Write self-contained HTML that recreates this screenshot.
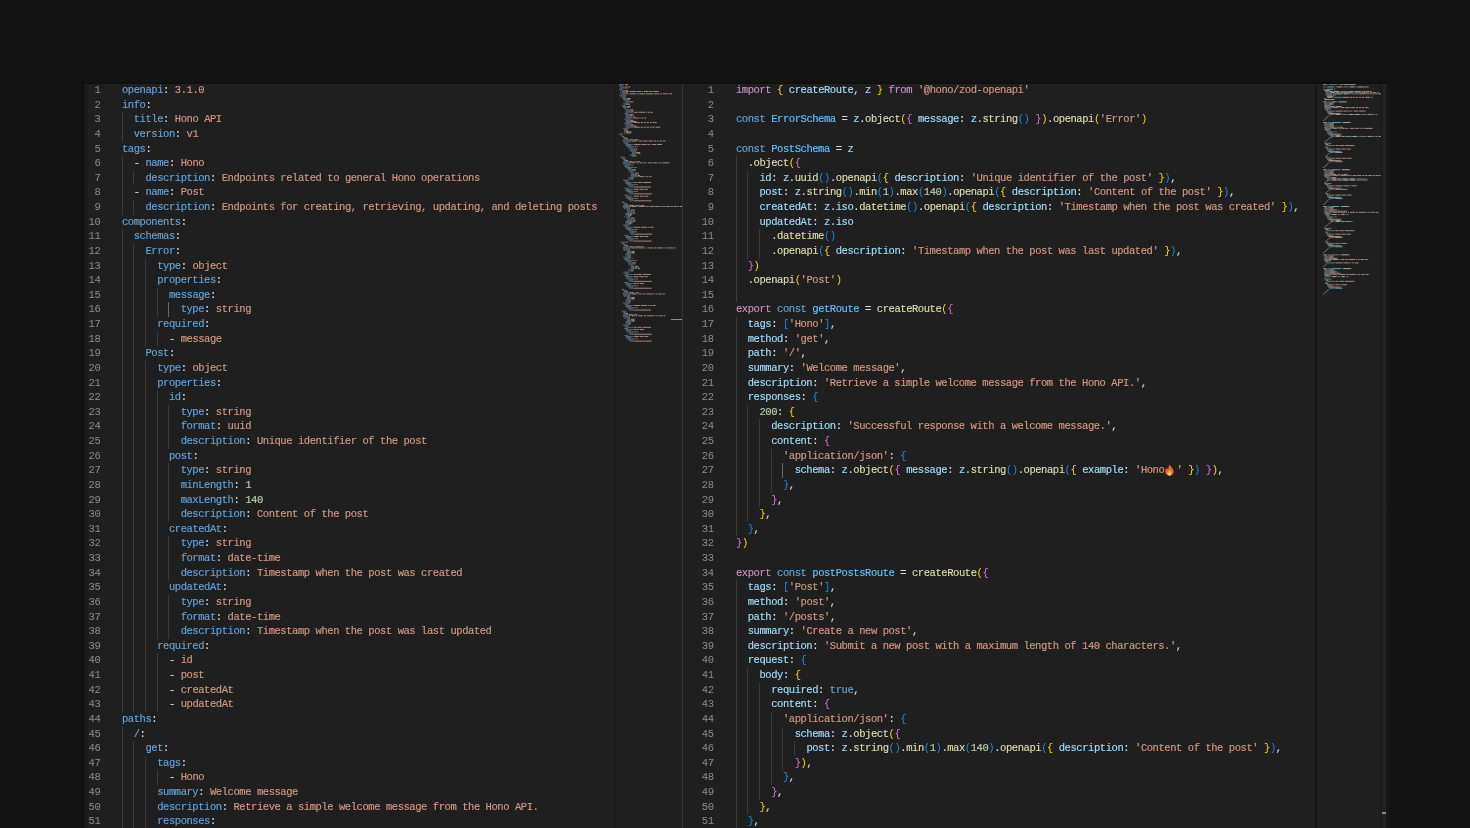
<!DOCTYPE html>
<html><head><meta charset="utf-8">
<style>
html,body{margin:0;padding:0}
body{width:1470px;height:828px;overflow:hidden;background:#131313;position:relative;font-family:"Liberation Mono",monospace}
.shadow{position:absolute;left:82px;top:82px;width:1306px;height:746px;background:#0f0f0f}
.ed{position:absolute;left:83.5px;top:84px;width:1302.5px;height:744px;background:#1f1f1f;overflow:hidden}
.gut,.code{position:absolute;top:-1px;font-size:10.5px;line-height:14.63px;letter-spacing:-0.437px}
.l,.n{white-space:pre}
.b{-webkit-text-stroke:0}
.gut,.code{will-change:transform}
.code{top:-0.7px;-webkit-text-stroke:0.15px currentColor}
.gut{color:#8d8d8d;text-align:right}
.n{height:14.63px}
.l{height:14.63px;position:relative;color:#d4d4d4}
.g{position:absolute;top:0;width:1px;height:14.63px;background:#3a3a3a}
.g.a{background:#6a6a6a}
.mm{position:absolute;top:0}
.mm rect{fill-opacity:.78}
.mm rect.k{fill-opacity:.5}
.bl{position:absolute;top:0;width:1.5px;height:744px;background:#161616}
.div{position:absolute;top:0;left:598.5px;width:1px;height:744px;background:#343434}
.sb{position:absolute;top:0;height:744px}
.mk{position:absolute;height:1.5px;background:#8e8e8e}
</style></head><body>
<div class="shadow"></div>
<div class="ed">
  <div style="position:absolute;left:0;top:0;width:4px;height:744px;background:#1b1b1b"></div>
  <div class="gut" style="left:0;width:16.3px"><div class="n">1</div><div class="n">2</div><div class="n">3</div><div class="n">4</div><div class="n">5</div><div class="n">6</div><div class="n">7</div><div class="n">8</div><div class="n">9</div><div class="n">10</div><div class="n">11</div><div class="n">12</div><div class="n">13</div><div class="n">14</div><div class="n">15</div><div class="n">16</div><div class="n">17</div><div class="n">18</div><div class="n">19</div><div class="n">20</div><div class="n">21</div><div class="n">22</div><div class="n">23</div><div class="n">24</div><div class="n">25</div><div class="n">26</div><div class="n">27</div><div class="n">28</div><div class="n">29</div><div class="n">30</div><div class="n">31</div><div class="n">32</div><div class="n">33</div><div class="n">34</div><div class="n">35</div><div class="n">36</div><div class="n">37</div><div class="n">38</div><div class="n">39</div><div class="n">40</div><div class="n">41</div><div class="n">42</div><div class="n">43</div><div class="n">44</div><div class="n">45</div><div class="n">46</div><div class="n">47</div><div class="n">48</div><div class="n">49</div><div class="n">50</div><div class="n">51</div></div>
  <div class="code" style="left:38.2px"><div class="l"><span style="color:#64a3d7">openapi</span><span style="color:#d8d8d8">:</span> <span style="color:#d09982">3.1.0</span></div><div class="l"><span style="color:#64a3d7">info</span><span style="color:#d8d8d8">:</span></div><div class="l"><i class="g" style="left:-0.50px"></i>  <span style="color:#64a3d7">title</span><span style="color:#d8d8d8">:</span> <span style="color:#d09982">Hono API</span></div><div class="l"><i class="g" style="left:-0.50px"></i>  <span style="color:#64a3d7">version</span><span style="color:#d8d8d8">:</span> <span style="color:#d09982">v1</span></div><div class="l"><span style="color:#64a3d7">tags</span><span style="color:#d8d8d8">:</span></div><div class="l"><i class="g" style="left:-0.50px"></i>  <span style="color:#d8d8d8">- </span><span style="color:#64a3d7">name</span><span style="color:#d8d8d8">:</span> <span style="color:#d09982">Hono</span></div><div class="l"><i class="g" style="left:-0.50px"></i><i class="g" style="left:11.22px"></i>    <span style="color:#64a3d7">description</span><span style="color:#d8d8d8">:</span> <span style="color:#d09982">Endpoints related to general Hono operations</span></div><div class="l"><i class="g" style="left:-0.50px"></i>  <span style="color:#d8d8d8">- </span><span style="color:#64a3d7">name</span><span style="color:#d8d8d8">:</span> <span style="color:#d09982">Post</span></div><div class="l"><i class="g" style="left:-0.50px"></i><i class="g" style="left:11.22px"></i>    <span style="color:#64a3d7">description</span><span style="color:#d8d8d8">:</span> <span style="color:#d09982">Endpoints for creating, retrieving, updating, and deleting posts</span></div><div class="l"><span style="color:#64a3d7">components</span><span style="color:#d8d8d8">:</span></div><div class="l"><i class="g" style="left:-0.50px"></i>  <span style="color:#64a3d7">schemas</span><span style="color:#d8d8d8">:</span></div><div class="l"><i class="g" style="left:-0.50px"></i><i class="g" style="left:11.22px"></i>    <span style="color:#64a3d7">Error</span><span style="color:#d8d8d8">:</span></div><div class="l"><i class="g" style="left:-0.50px"></i><i class="g" style="left:11.22px"></i><i class="g" style="left:22.95px"></i>      <span style="color:#64a3d7">type</span><span style="color:#d8d8d8">:</span> <span style="color:#d09982">object</span></div><div class="l"><i class="g" style="left:-0.50px"></i><i class="g" style="left:11.22px"></i><i class="g" style="left:22.95px"></i>      <span style="color:#64a3d7">properties</span><span style="color:#d8d8d8">:</span></div><div class="l"><i class="g" style="left:-0.50px"></i><i class="g" style="left:11.22px"></i><i class="g" style="left:22.95px"></i><i class="g" style="left:34.67px"></i>        <span style="color:#64a3d7">message</span><span style="color:#d8d8d8">:</span></div><div class="l"><i class="g" style="left:-0.50px"></i><i class="g" style="left:11.22px"></i><i class="g" style="left:22.95px"></i><i class="g" style="left:34.67px"></i><i class="g a" style="left:46.40px"></i>          <span style="color:#64a3d7">type</span><span style="color:#d8d8d8">:</span> <span style="color:#d09982">string</span></div><div class="l"><i class="g" style="left:-0.50px"></i><i class="g" style="left:11.22px"></i><i class="g" style="left:22.95px"></i>      <span style="color:#64a3d7">required</span><span style="color:#d8d8d8">:</span></div><div class="l"><i class="g" style="left:-0.50px"></i><i class="g" style="left:11.22px"></i><i class="g" style="left:22.95px"></i><i class="g" style="left:34.67px"></i>        <span style="color:#d8d8d8">- </span><span style="color:#d09982">message</span></div><div class="l"><i class="g" style="left:-0.50px"></i><i class="g" style="left:11.22px"></i>    <span style="color:#64a3d7">Post</span><span style="color:#d8d8d8">:</span></div><div class="l"><i class="g" style="left:-0.50px"></i><i class="g" style="left:11.22px"></i><i class="g" style="left:22.95px"></i>      <span style="color:#64a3d7">type</span><span style="color:#d8d8d8">:</span> <span style="color:#d09982">object</span></div><div class="l"><i class="g" style="left:-0.50px"></i><i class="g" style="left:11.22px"></i><i class="g" style="left:22.95px"></i>      <span style="color:#64a3d7">properties</span><span style="color:#d8d8d8">:</span></div><div class="l"><i class="g" style="left:-0.50px"></i><i class="g" style="left:11.22px"></i><i class="g" style="left:22.95px"></i><i class="g" style="left:34.67px"></i>        <span style="color:#64a3d7">id</span><span style="color:#d8d8d8">:</span></div><div class="l"><i class="g" style="left:-0.50px"></i><i class="g" style="left:11.22px"></i><i class="g" style="left:22.95px"></i><i class="g" style="left:34.67px"></i><i class="g" style="left:46.40px"></i>          <span style="color:#64a3d7">type</span><span style="color:#d8d8d8">:</span> <span style="color:#d09982">string</span></div><div class="l"><i class="g" style="left:-0.50px"></i><i class="g" style="left:11.22px"></i><i class="g" style="left:22.95px"></i><i class="g" style="left:34.67px"></i><i class="g" style="left:46.40px"></i>          <span style="color:#64a3d7">format</span><span style="color:#d8d8d8">:</span> <span style="color:#d09982">uuid</span></div><div class="l"><i class="g" style="left:-0.50px"></i><i class="g" style="left:11.22px"></i><i class="g" style="left:22.95px"></i><i class="g" style="left:34.67px"></i><i class="g" style="left:46.40px"></i>          <span style="color:#64a3d7">description</span><span style="color:#d8d8d8">:</span> <span style="color:#d09982">Unique identifier of the post</span></div><div class="l"><i class="g" style="left:-0.50px"></i><i class="g" style="left:11.22px"></i><i class="g" style="left:22.95px"></i><i class="g" style="left:34.67px"></i>        <span style="color:#64a3d7">post</span><span style="color:#d8d8d8">:</span></div><div class="l"><i class="g" style="left:-0.50px"></i><i class="g" style="left:11.22px"></i><i class="g" style="left:22.95px"></i><i class="g" style="left:34.67px"></i><i class="g" style="left:46.40px"></i>          <span style="color:#64a3d7">type</span><span style="color:#d8d8d8">:</span> <span style="color:#d09982">string</span></div><div class="l"><i class="g" style="left:-0.50px"></i><i class="g" style="left:11.22px"></i><i class="g" style="left:22.95px"></i><i class="g" style="left:34.67px"></i><i class="g" style="left:46.40px"></i>          <span style="color:#64a3d7">minLength</span><span style="color:#d8d8d8">:</span> <span style="color:#b9d0ae">1</span></div><div class="l"><i class="g" style="left:-0.50px"></i><i class="g" style="left:11.22px"></i><i class="g" style="left:22.95px"></i><i class="g" style="left:34.67px"></i><i class="g" style="left:46.40px"></i>          <span style="color:#64a3d7">maxLength</span><span style="color:#d8d8d8">:</span> <span style="color:#b9d0ae">140</span></div><div class="l"><i class="g" style="left:-0.50px"></i><i class="g" style="left:11.22px"></i><i class="g" style="left:22.95px"></i><i class="g" style="left:34.67px"></i><i class="g" style="left:46.40px"></i>          <span style="color:#64a3d7">description</span><span style="color:#d8d8d8">:</span> <span style="color:#d09982">Content of the post</span></div><div class="l"><i class="g" style="left:-0.50px"></i><i class="g" style="left:11.22px"></i><i class="g" style="left:22.95px"></i><i class="g" style="left:34.67px"></i>        <span style="color:#64a3d7">createdAt</span><span style="color:#d8d8d8">:</span></div><div class="l"><i class="g" style="left:-0.50px"></i><i class="g" style="left:11.22px"></i><i class="g" style="left:22.95px"></i><i class="g" style="left:34.67px"></i><i class="g" style="left:46.40px"></i>          <span style="color:#64a3d7">type</span><span style="color:#d8d8d8">:</span> <span style="color:#d09982">string</span></div><div class="l"><i class="g" style="left:-0.50px"></i><i class="g" style="left:11.22px"></i><i class="g" style="left:22.95px"></i><i class="g" style="left:34.67px"></i><i class="g" style="left:46.40px"></i>          <span style="color:#64a3d7">format</span><span style="color:#d8d8d8">:</span> <span style="color:#d09982">date-time</span></div><div class="l"><i class="g" style="left:-0.50px"></i><i class="g" style="left:11.22px"></i><i class="g" style="left:22.95px"></i><i class="g" style="left:34.67px"></i><i class="g" style="left:46.40px"></i>          <span style="color:#64a3d7">description</span><span style="color:#d8d8d8">:</span> <span style="color:#d09982">Timestamp when the post was created</span></div><div class="l"><i class="g" style="left:-0.50px"></i><i class="g" style="left:11.22px"></i><i class="g" style="left:22.95px"></i><i class="g" style="left:34.67px"></i>        <span style="color:#64a3d7">updatedAt</span><span style="color:#d8d8d8">:</span></div><div class="l"><i class="g" style="left:-0.50px"></i><i class="g" style="left:11.22px"></i><i class="g" style="left:22.95px"></i><i class="g" style="left:34.67px"></i><i class="g" style="left:46.40px"></i>          <span style="color:#64a3d7">type</span><span style="color:#d8d8d8">:</span> <span style="color:#d09982">string</span></div><div class="l"><i class="g" style="left:-0.50px"></i><i class="g" style="left:11.22px"></i><i class="g" style="left:22.95px"></i><i class="g" style="left:34.67px"></i><i class="g" style="left:46.40px"></i>          <span style="color:#64a3d7">format</span><span style="color:#d8d8d8">:</span> <span style="color:#d09982">date-time</span></div><div class="l"><i class="g" style="left:-0.50px"></i><i class="g" style="left:11.22px"></i><i class="g" style="left:22.95px"></i><i class="g" style="left:34.67px"></i><i class="g" style="left:46.40px"></i>          <span style="color:#64a3d7">description</span><span style="color:#d8d8d8">:</span> <span style="color:#d09982">Timestamp when the post was last updated</span></div><div class="l"><i class="g" style="left:-0.50px"></i><i class="g" style="left:11.22px"></i><i class="g" style="left:22.95px"></i>      <span style="color:#64a3d7">required</span><span style="color:#d8d8d8">:</span></div><div class="l"><i class="g" style="left:-0.50px"></i><i class="g" style="left:11.22px"></i><i class="g" style="left:22.95px"></i><i class="g" style="left:34.67px"></i>        <span style="color:#d8d8d8">- </span><span style="color:#d09982">id</span></div><div class="l"><i class="g" style="left:-0.50px"></i><i class="g" style="left:11.22px"></i><i class="g" style="left:22.95px"></i><i class="g" style="left:34.67px"></i>        <span style="color:#d8d8d8">- </span><span style="color:#d09982">post</span></div><div class="l"><i class="g" style="left:-0.50px"></i><i class="g" style="left:11.22px"></i><i class="g" style="left:22.95px"></i><i class="g" style="left:34.67px"></i>        <span style="color:#d8d8d8">- </span><span style="color:#d09982">createdAt</span></div><div class="l"><i class="g" style="left:-0.50px"></i><i class="g" style="left:11.22px"></i><i class="g" style="left:22.95px"></i><i class="g" style="left:34.67px"></i>        <span style="color:#d8d8d8">- </span><span style="color:#d09982">updatedAt</span></div><div class="l"><span style="color:#64a3d7">paths</span><span style="color:#d8d8d8">:</span></div><div class="l"><i class="g" style="left:-0.50px"></i>  <span style="color:#64a3d7">/</span><span style="color:#d8d8d8">:</span></div><div class="l"><i class="g" style="left:-0.50px"></i><i class="g" style="left:11.22px"></i>    <span style="color:#64a3d7">get</span><span style="color:#d8d8d8">:</span></div><div class="l"><i class="g" style="left:-0.50px"></i><i class="g" style="left:11.22px"></i><i class="g" style="left:22.95px"></i>      <span style="color:#64a3d7">tags</span><span style="color:#d8d8d8">:</span></div><div class="l"><i class="g" style="left:-0.50px"></i><i class="g" style="left:11.22px"></i><i class="g" style="left:22.95px"></i><i class="g" style="left:34.67px"></i>        <span style="color:#d8d8d8">- </span><span style="color:#d09982">Hono</span></div><div class="l"><i class="g" style="left:-0.50px"></i><i class="g" style="left:11.22px"></i><i class="g" style="left:22.95px"></i>      <span style="color:#64a3d7">summary</span><span style="color:#d8d8d8">:</span> <span style="color:#d09982">Welcome message</span></div><div class="l"><i class="g" style="left:-0.50px"></i><i class="g" style="left:11.22px"></i><i class="g" style="left:22.95px"></i>      <span style="color:#64a3d7">description</span><span style="color:#d8d8d8">:</span> <span style="color:#d09982">Retrieve a simple welcome message from the Hono API.</span></div><div class="l"><i class="g" style="left:-0.50px"></i><i class="g" style="left:11.22px"></i><i class="g" style="left:22.95px"></i>      <span style="color:#64a3d7">responses</span><span style="color:#d8d8d8">:</span></div></div>
  <div class="bl" style="left:530px"></div>
  <svg class="mm" style="left:531.5px" width="67" height="744"><rect class="k" x="4.00" y="0.20" width="4.44" height="0.90" fill="#8cb9dd"/><rect x="8.59" y="0.20" width="0.51" height="0.90" fill="#dedede"/><rect x="9.90" y="0.20" width="3.13" height="0.90" fill="#d8b2a2"/><rect class="k" x="4.00" y="1.35" width="2.47" height="0.90" fill="#8cb9dd"/><rect x="6.62" y="1.35" width="0.51" height="0.90" fill="#dedede"/><rect class="k" x="5.31" y="2.50" width="3.13" height="0.90" fill="#8cb9dd"/><rect x="8.59" y="2.50" width="0.51" height="0.90" fill="#dedede"/><rect x="9.90" y="2.50" width="2.47" height="0.90" fill="#d8b2a2"/><rect x="13.18" y="2.50" width="1.82" height="0.90" fill="#d8b2a2"/><rect class="k" x="5.31" y="3.65" width="4.44" height="0.90" fill="#8cb9dd"/><rect x="9.90" y="3.65" width="0.51" height="0.90" fill="#dedede"/><rect x="11.22" y="3.65" width="1.16" height="0.90" fill="#d8b2a2"/><rect class="k" x="4.00" y="4.80" width="2.47" height="0.90" fill="#8cb9dd"/><rect x="6.62" y="4.80" width="0.51" height="0.90" fill="#dedede"/><rect x="5.31" y="5.95" width="0.51" height="0.90" fill="#dedede"/><rect class="k" x="6.62" y="5.95" width="2.47" height="0.90" fill="#8cb9dd"/><rect x="9.25" y="5.95" width="0.51" height="0.90" fill="#dedede"/><rect x="10.56" y="5.95" width="2.47" height="0.90" fill="#d8b2a2"/><rect class="k" x="6.62" y="7.10" width="7.07" height="0.90" fill="#8cb9dd"/><rect x="13.84" y="7.10" width="0.51" height="0.90" fill="#dedede"/><rect x="15.15" y="7.10" width="5.75" height="0.90" fill="#d8b2a2"/><rect x="21.71" y="7.10" width="4.44" height="0.90" fill="#d8b2a2"/><rect x="26.96" y="7.10" width="1.16" height="0.90" fill="#d8b2a2"/><rect x="28.93" y="7.10" width="4.44" height="0.90" fill="#d8b2a2"/><rect x="34.18" y="7.10" width="2.47" height="0.90" fill="#d8b2a2"/><rect x="37.46" y="7.10" width="6.41" height="0.90" fill="#d8b2a2"/><rect x="5.31" y="8.25" width="0.51" height="0.90" fill="#dedede"/><rect class="k" x="6.62" y="8.25" width="2.47" height="0.90" fill="#8cb9dd"/><rect x="9.25" y="8.25" width="0.51" height="0.90" fill="#dedede"/><rect x="10.56" y="8.25" width="2.47" height="0.90" fill="#d8b2a2"/><rect class="k" x="6.62" y="9.40" width="7.07" height="0.90" fill="#8cb9dd"/><rect x="13.84" y="9.40" width="0.51" height="0.90" fill="#dedede"/><rect x="15.15" y="9.40" width="5.75" height="0.90" fill="#d8b2a2"/><rect x="21.71" y="9.40" width="1.82" height="0.90" fill="#d8b2a2"/><rect x="24.34" y="9.40" width="5.75" height="0.90" fill="#d8b2a2"/><rect x="30.90" y="9.40" width="7.07" height="0.90" fill="#d8b2a2"/><rect x="38.77" y="9.40" width="5.75" height="0.90" fill="#d8b2a2"/><rect x="45.33" y="9.40" width="1.82" height="0.90" fill="#d8b2a2"/><rect x="47.95" y="9.40" width="5.10" height="0.90" fill="#d8b2a2"/><rect x="53.86" y="9.40" width="3.13" height="0.90" fill="#d8b2a2"/><rect class="k" x="4.00" y="10.55" width="6.41" height="0.90" fill="#8cb9dd"/><rect x="10.56" y="10.55" width="0.51" height="0.90" fill="#dedede"/><rect class="k" x="5.31" y="11.70" width="4.44" height="0.90" fill="#8cb9dd"/><rect x="9.90" y="11.70" width="0.51" height="0.90" fill="#dedede"/><rect class="k" x="6.62" y="12.85" width="3.13" height="0.90" fill="#8cb9dd"/><rect x="9.90" y="12.85" width="0.51" height="0.90" fill="#dedede"/><rect class="k" x="7.94" y="14.00" width="2.47" height="0.90" fill="#8cb9dd"/><rect x="10.56" y="14.00" width="0.51" height="0.90" fill="#dedede"/><rect x="11.87" y="14.00" width="3.79" height="0.90" fill="#d8b2a2"/><rect class="k" x="7.94" y="15.15" width="6.41" height="0.90" fill="#8cb9dd"/><rect x="14.50" y="15.15" width="0.51" height="0.90" fill="#dedede"/><rect class="k" x="9.25" y="16.30" width="4.44" height="0.90" fill="#8cb9dd"/><rect x="13.84" y="16.30" width="0.51" height="0.90" fill="#dedede"/><rect class="k" x="10.56" y="17.45" width="2.47" height="0.90" fill="#8cb9dd"/><rect x="13.18" y="17.45" width="0.51" height="0.90" fill="#dedede"/><rect x="14.50" y="17.45" width="3.79" height="0.90" fill="#d8b2a2"/><rect class="k" x="7.94" y="18.60" width="5.10" height="0.90" fill="#8cb9dd"/><rect x="13.18" y="18.60" width="0.51" height="0.90" fill="#dedede"/><rect x="9.25" y="19.75" width="0.51" height="0.90" fill="#dedede"/><rect x="10.56" y="19.75" width="4.44" height="0.90" fill="#d8b2a2"/><rect class="k" x="6.62" y="20.90" width="2.47" height="0.90" fill="#8cb9dd"/><rect x="9.25" y="20.90" width="0.51" height="0.90" fill="#dedede"/><rect class="k" x="7.94" y="22.05" width="2.47" height="0.90" fill="#8cb9dd"/><rect x="10.56" y="22.05" width="0.51" height="0.90" fill="#dedede"/><rect x="11.87" y="22.05" width="3.79" height="0.90" fill="#d8b2a2"/><rect class="k" x="7.94" y="23.20" width="6.41" height="0.90" fill="#8cb9dd"/><rect x="14.50" y="23.20" width="0.51" height="0.90" fill="#dedede"/><rect class="k" x="9.25" y="24.35" width="1.16" height="0.90" fill="#8cb9dd"/><rect x="10.56" y="24.35" width="0.51" height="0.90" fill="#dedede"/><rect class="k" x="10.56" y="25.50" width="2.47" height="0.90" fill="#8cb9dd"/><rect x="13.18" y="25.50" width="0.51" height="0.90" fill="#dedede"/><rect x="14.50" y="25.50" width="3.79" height="0.90" fill="#d8b2a2"/><rect class="k" x="10.56" y="26.65" width="3.79" height="0.90" fill="#8cb9dd"/><rect x="14.50" y="26.65" width="0.51" height="0.90" fill="#dedede"/><rect x="15.81" y="26.65" width="2.47" height="0.90" fill="#d8b2a2"/><rect class="k" x="10.56" y="27.80" width="7.07" height="0.90" fill="#8cb9dd"/><rect x="17.78" y="27.80" width="0.51" height="0.90" fill="#dedede"/><rect x="19.09" y="27.80" width="3.79" height="0.90" fill="#d8b2a2"/><rect x="23.68" y="27.80" width="6.41" height="0.90" fill="#d8b2a2"/><rect x="30.90" y="27.80" width="1.16" height="0.90" fill="#d8b2a2"/><rect x="32.86" y="27.80" width="1.82" height="0.90" fill="#d8b2a2"/><rect x="35.49" y="27.80" width="2.47" height="0.90" fill="#d8b2a2"/><rect class="k" x="9.25" y="28.95" width="2.47" height="0.90" fill="#8cb9dd"/><rect x="11.87" y="28.95" width="0.51" height="0.90" fill="#dedede"/><rect class="k" x="10.56" y="30.10" width="2.47" height="0.90" fill="#8cb9dd"/><rect x="13.18" y="30.10" width="0.51" height="0.90" fill="#dedede"/><rect x="14.50" y="30.10" width="3.79" height="0.90" fill="#d8b2a2"/><rect class="k" x="10.56" y="31.25" width="5.75" height="0.90" fill="#8cb9dd"/><rect x="16.46" y="31.25" width="0.51" height="0.90" fill="#dedede"/><rect x="17.78" y="31.25" width="0.51" height="0.90" fill="#c8d8c0"/><rect class="k" x="10.56" y="32.40" width="5.75" height="0.90" fill="#8cb9dd"/><rect x="16.46" y="32.40" width="0.51" height="0.90" fill="#dedede"/><rect x="17.78" y="32.40" width="1.82" height="0.90" fill="#c8d8c0"/><rect class="k" x="10.56" y="33.55" width="7.07" height="0.90" fill="#8cb9dd"/><rect x="17.78" y="33.55" width="0.51" height="0.90" fill="#dedede"/><rect x="19.09" y="33.55" width="4.44" height="0.90" fill="#d8b2a2"/><rect x="24.34" y="33.55" width="1.16" height="0.90" fill="#d8b2a2"/><rect x="26.30" y="33.55" width="1.82" height="0.90" fill="#d8b2a2"/><rect x="28.93" y="33.55" width="2.47" height="0.90" fill="#d8b2a2"/><rect class="k" x="9.25" y="34.70" width="5.75" height="0.90" fill="#8cb9dd"/><rect x="15.15" y="34.70" width="0.51" height="0.90" fill="#dedede"/><rect class="k" x="10.56" y="35.85" width="2.47" height="0.90" fill="#8cb9dd"/><rect x="13.18" y="35.85" width="0.51" height="0.90" fill="#dedede"/><rect x="14.50" y="35.85" width="3.79" height="0.90" fill="#d8b2a2"/><rect class="k" x="10.56" y="37.00" width="3.79" height="0.90" fill="#8cb9dd"/><rect x="14.50" y="37.00" width="0.51" height="0.90" fill="#dedede"/><rect x="15.81" y="37.00" width="5.75" height="0.90" fill="#d8b2a2"/><rect class="k" x="10.56" y="38.15" width="7.07" height="0.90" fill="#8cb9dd"/><rect x="17.78" y="38.15" width="0.51" height="0.90" fill="#dedede"/><rect x="19.09" y="38.15" width="5.75" height="0.90" fill="#d8b2a2"/><rect x="25.65" y="38.15" width="2.47" height="0.90" fill="#d8b2a2"/><rect x="28.93" y="38.15" width="1.82" height="0.90" fill="#d8b2a2"/><rect x="31.55" y="38.15" width="2.47" height="0.90" fill="#d8b2a2"/><rect x="34.83" y="38.15" width="1.82" height="0.90" fill="#d8b2a2"/><rect x="37.46" y="38.15" width="4.44" height="0.90" fill="#d8b2a2"/><rect class="k" x="9.25" y="39.30" width="5.75" height="0.90" fill="#8cb9dd"/><rect x="15.15" y="39.30" width="0.51" height="0.90" fill="#dedede"/><rect class="k" x="10.56" y="40.45" width="2.47" height="0.90" fill="#8cb9dd"/><rect x="13.18" y="40.45" width="0.51" height="0.90" fill="#dedede"/><rect x="14.50" y="40.45" width="3.79" height="0.90" fill="#d8b2a2"/><rect class="k" x="10.56" y="41.60" width="3.79" height="0.90" fill="#8cb9dd"/><rect x="14.50" y="41.60" width="0.51" height="0.90" fill="#dedede"/><rect x="15.81" y="41.60" width="5.75" height="0.90" fill="#d8b2a2"/><rect class="k" x="10.56" y="42.75" width="7.07" height="0.90" fill="#8cb9dd"/><rect x="17.78" y="42.75" width="0.51" height="0.90" fill="#dedede"/><rect x="19.09" y="42.75" width="5.75" height="0.90" fill="#d8b2a2"/><rect x="25.65" y="42.75" width="2.47" height="0.90" fill="#d8b2a2"/><rect x="28.93" y="42.75" width="1.82" height="0.90" fill="#d8b2a2"/><rect x="31.55" y="42.75" width="2.47" height="0.90" fill="#d8b2a2"/><rect x="34.83" y="42.75" width="1.82" height="0.90" fill="#d8b2a2"/><rect x="37.46" y="42.75" width="2.47" height="0.90" fill="#d8b2a2"/><rect x="40.74" y="42.75" width="4.44" height="0.90" fill="#d8b2a2"/><rect class="k" x="7.94" y="43.90" width="5.10" height="0.90" fill="#8cb9dd"/><rect x="13.18" y="43.90" width="0.51" height="0.90" fill="#dedede"/><rect x="9.25" y="45.05" width="0.51" height="0.90" fill="#dedede"/><rect x="10.56" y="45.05" width="1.16" height="0.90" fill="#d8b2a2"/><rect x="9.25" y="46.20" width="0.51" height="0.90" fill="#dedede"/><rect x="10.56" y="46.20" width="2.47" height="0.90" fill="#d8b2a2"/><rect x="9.25" y="47.35" width="0.51" height="0.90" fill="#dedede"/><rect x="10.56" y="47.35" width="5.75" height="0.90" fill="#d8b2a2"/><rect x="9.25" y="48.50" width="0.51" height="0.90" fill="#dedede"/><rect x="10.56" y="48.50" width="5.75" height="0.90" fill="#d8b2a2"/><rect class="k" x="4.00" y="49.65" width="3.13" height="0.90" fill="#8cb9dd"/><rect x="7.28" y="49.65" width="0.51" height="0.90" fill="#dedede"/><rect class="k" x="5.31" y="50.80" width="0.51" height="0.90" fill="#8cb9dd"/><rect x="5.97" y="50.80" width="0.51" height="0.90" fill="#dedede"/><rect class="k" x="6.62" y="51.95" width="1.82" height="0.90" fill="#8cb9dd"/><rect x="8.59" y="51.95" width="0.51" height="0.90" fill="#dedede"/><rect class="k" x="7.94" y="53.10" width="2.47" height="0.90" fill="#8cb9dd"/><rect x="10.56" y="53.10" width="0.51" height="0.90" fill="#dedede"/><rect x="9.25" y="54.25" width="0.51" height="0.90" fill="#dedede"/><rect x="10.56" y="54.25" width="2.47" height="0.90" fill="#d8b2a2"/><rect class="k" x="7.94" y="55.40" width="4.44" height="0.90" fill="#8cb9dd"/><rect x="12.53" y="55.40" width="0.51" height="0.90" fill="#dedede"/><rect x="13.84" y="55.40" width="4.44" height="0.90" fill="#d8b2a2"/><rect x="19.09" y="55.40" width="4.44" height="0.90" fill="#d8b2a2"/><rect class="k" x="7.94" y="56.55" width="7.07" height="0.90" fill="#8cb9dd"/><rect x="15.15" y="56.55" width="0.51" height="0.90" fill="#dedede"/><rect x="16.46" y="56.55" width="5.10" height="0.90" fill="#d8b2a2"/><rect x="22.37" y="56.55" width="0.51" height="0.90" fill="#d8b2a2"/><rect x="23.68" y="56.55" width="3.79" height="0.90" fill="#d8b2a2"/><rect x="28.27" y="56.55" width="4.44" height="0.90" fill="#d8b2a2"/><rect x="33.52" y="56.55" width="4.44" height="0.90" fill="#d8b2a2"/><rect x="38.77" y="56.55" width="2.47" height="0.90" fill="#d8b2a2"/><rect x="42.05" y="56.55" width="1.82" height="0.90" fill="#d8b2a2"/><rect x="44.67" y="56.55" width="2.47" height="0.90" fill="#d8b2a2"/><rect x="47.95" y="56.55" width="2.47" height="0.90" fill="#d8b2a2"/><rect class="k" x="7.94" y="57.70" width="5.75" height="0.90" fill="#8cb9dd"/><rect x="13.84" y="57.70" width="0.51" height="0.90" fill="#dedede"/><rect class="k" x="9.25" y="58.85" width="3.13" height="0.90" fill="#8cb9dd"/><rect x="12.53" y="58.85" width="0.51" height="0.90" fill="#dedede"/><rect class="k" x="10.56" y="60.00" width="7.07" height="0.90" fill="#8cb9dd"/><rect x="17.78" y="60.00" width="0.51" height="0.90" fill="#dedede"/><rect x="19.09" y="60.00" width="6.41" height="0.90" fill="#d8b2a2"/><rect x="26.30" y="60.00" width="5.10" height="0.90" fill="#d8b2a2"/><rect x="32.21" y="60.00" width="2.47" height="0.90" fill="#d8b2a2"/><rect x="35.49" y="60.00" width="0.51" height="0.90" fill="#d8b2a2"/><rect x="36.80" y="60.00" width="4.44" height="0.90" fill="#d8b2a2"/><rect x="42.05" y="60.00" width="5.10" height="0.90" fill="#d8b2a2"/><rect class="k" x="10.56" y="61.15" width="4.44" height="0.90" fill="#8cb9dd"/><rect x="15.15" y="61.15" width="0.51" height="0.90" fill="#dedede"/><rect class="k" x="11.87" y="62.30" width="10.35" height="0.90" fill="#8cb9dd"/><rect x="22.37" y="62.30" width="0.51" height="0.90" fill="#dedede"/><rect class="k" x="13.18" y="63.45" width="3.79" height="0.90" fill="#8cb9dd"/><rect x="17.12" y="63.45" width="0.51" height="0.90" fill="#dedede"/><rect class="k" x="14.50" y="64.60" width="2.47" height="0.90" fill="#8cb9dd"/><rect x="17.12" y="64.60" width="0.51" height="0.90" fill="#dedede"/><rect x="18.43" y="64.60" width="3.79" height="0.90" fill="#d8b2a2"/><rect class="k" x="14.50" y="65.75" width="6.41" height="0.90" fill="#8cb9dd"/><rect x="21.06" y="65.75" width="0.51" height="0.90" fill="#dedede"/><rect class="k" x="15.81" y="66.90" width="4.44" height="0.90" fill="#8cb9dd"/><rect x="20.40" y="66.90" width="0.51" height="0.90" fill="#dedede"/><rect class="k" x="17.12" y="68.05" width="2.47" height="0.90" fill="#8cb9dd"/><rect x="19.74" y="68.05" width="0.51" height="0.90" fill="#dedede"/><rect x="21.06" y="68.05" width="3.79" height="0.90" fill="#d8b2a2"/><rect class="k" x="17.12" y="69.20" width="4.44" height="0.90" fill="#8cb9dd"/><rect x="21.71" y="69.20" width="0.51" height="0.90" fill="#dedede"/><rect x="23.02" y="69.20" width="2.47" height="0.90" fill="#d8b2a2"/><rect class="k" x="14.50" y="70.35" width="5.10" height="0.90" fill="#8cb9dd"/><rect x="19.74" y="70.35" width="0.51" height="0.90" fill="#dedede"/><rect x="15.81" y="71.50" width="0.51" height="0.90" fill="#dedede"/><rect x="17.12" y="71.50" width="4.44" height="0.90" fill="#d8b2a2"/><rect class="k" x="5.31" y="72.65" width="3.79" height="0.90" fill="#8cb9dd"/><rect x="9.25" y="72.65" width="0.51" height="0.90" fill="#dedede"/><rect class="k" x="6.62" y="73.80" width="2.47" height="0.90" fill="#8cb9dd"/><rect x="9.25" y="73.80" width="0.51" height="0.90" fill="#dedede"/><rect class="k" x="7.94" y="74.95" width="2.47" height="0.90" fill="#8cb9dd"/><rect x="10.56" y="74.95" width="0.51" height="0.90" fill="#dedede"/><rect x="9.25" y="76.10" width="0.51" height="0.90" fill="#dedede"/><rect x="10.56" y="76.10" width="2.47" height="0.90" fill="#d8b2a2"/><rect class="k" x="7.94" y="77.25" width="4.44" height="0.90" fill="#8cb9dd"/><rect x="12.53" y="77.25" width="0.51" height="0.90" fill="#dedede"/><rect x="13.84" y="77.25" width="3.79" height="0.90" fill="#d8b2a2"/><rect x="18.43" y="77.25" width="0.51" height="0.90" fill="#d8b2a2"/><rect x="19.74" y="77.25" width="1.82" height="0.90" fill="#d8b2a2"/><rect x="22.37" y="77.25" width="2.47" height="0.90" fill="#d8b2a2"/><rect class="k" x="7.94" y="78.40" width="7.07" height="0.90" fill="#8cb9dd"/><rect x="15.15" y="78.40" width="0.51" height="0.90" fill="#dedede"/><rect x="16.46" y="78.40" width="3.79" height="0.90" fill="#d8b2a2"/><rect x="21.06" y="78.40" width="0.51" height="0.90" fill="#d8b2a2"/><rect x="22.37" y="78.40" width="1.82" height="0.90" fill="#d8b2a2"/><rect x="24.99" y="78.40" width="2.47" height="0.90" fill="#d8b2a2"/><rect x="28.27" y="78.40" width="2.47" height="0.90" fill="#d8b2a2"/><rect x="31.55" y="78.40" width="0.51" height="0.90" fill="#d8b2a2"/><rect x="32.86" y="78.40" width="4.44" height="0.90" fill="#d8b2a2"/><rect x="38.11" y="78.40" width="3.79" height="0.90" fill="#d8b2a2"/><rect x="42.70" y="78.40" width="1.16" height="0.90" fill="#d8b2a2"/><rect x="44.67" y="78.40" width="1.82" height="0.90" fill="#d8b2a2"/><rect x="47.30" y="78.40" width="7.07" height="0.90" fill="#d8b2a2"/><rect class="k" x="7.94" y="79.55" width="7.07" height="0.90" fill="#8cb9dd"/><rect x="15.15" y="79.55" width="0.51" height="0.90" fill="#dedede"/><rect class="k" x="9.25" y="80.70" width="5.10" height="0.90" fill="#8cb9dd"/><rect x="14.50" y="80.70" width="0.51" height="0.90" fill="#dedede"/><rect class="k" x="15.81" y="80.70" width="2.47" height="0.90" fill="#8cb9dd"/><rect class="k" x="9.25" y="81.85" width="4.44" height="0.90" fill="#8cb9dd"/><rect x="13.84" y="81.85" width="0.51" height="0.90" fill="#dedede"/><rect class="k" x="10.56" y="83.00" width="10.35" height="0.90" fill="#8cb9dd"/><rect x="21.06" y="83.00" width="0.51" height="0.90" fill="#dedede"/><rect class="k" x="11.87" y="84.15" width="3.79" height="0.90" fill="#8cb9dd"/><rect x="15.81" y="84.15" width="0.51" height="0.90" fill="#dedede"/><rect class="k" x="13.18" y="85.30" width="2.47" height="0.90" fill="#8cb9dd"/><rect x="15.81" y="85.30" width="0.51" height="0.90" fill="#dedede"/><rect x="17.12" y="85.30" width="3.79" height="0.90" fill="#d8b2a2"/><rect class="k" x="13.18" y="86.45" width="6.41" height="0.90" fill="#8cb9dd"/><rect x="19.74" y="86.45" width="0.51" height="0.90" fill="#dedede"/><rect class="k" x="14.50" y="87.60" width="2.47" height="0.90" fill="#8cb9dd"/><rect x="17.12" y="87.60" width="0.51" height="0.90" fill="#dedede"/><rect class="k" x="15.81" y="88.75" width="2.47" height="0.90" fill="#8cb9dd"/><rect x="18.43" y="88.75" width="0.51" height="0.90" fill="#dedede"/><rect x="19.74" y="88.75" width="3.79" height="0.90" fill="#d8b2a2"/><rect class="k" x="15.81" y="89.90" width="5.75" height="0.90" fill="#8cb9dd"/><rect x="21.71" y="89.90" width="0.51" height="0.90" fill="#dedede"/><rect x="23.02" y="89.90" width="0.51" height="0.90" fill="#c8d8c0"/><rect class="k" x="15.81" y="91.05" width="5.75" height="0.90" fill="#8cb9dd"/><rect x="21.71" y="91.05" width="0.51" height="0.90" fill="#dedede"/><rect x="23.02" y="91.05" width="1.82" height="0.90" fill="#c8d8c0"/><rect class="k" x="15.81" y="92.20" width="7.07" height="0.90" fill="#8cb9dd"/><rect x="23.02" y="92.20" width="0.51" height="0.90" fill="#dedede"/><rect x="24.34" y="92.20" width="4.44" height="0.90" fill="#d8b2a2"/><rect x="29.58" y="92.20" width="1.16" height="0.90" fill="#d8b2a2"/><rect x="31.55" y="92.20" width="1.82" height="0.90" fill="#d8b2a2"/><rect x="34.18" y="92.20" width="2.47" height="0.90" fill="#d8b2a2"/><rect class="k" x="13.18" y="93.35" width="5.10" height="0.90" fill="#8cb9dd"/><rect x="18.43" y="93.35" width="0.51" height="0.90" fill="#dedede"/><rect x="14.50" y="94.50" width="0.51" height="0.90" fill="#dedede"/><rect x="15.81" y="94.50" width="2.47" height="0.90" fill="#d8b2a2"/><rect class="k" x="7.94" y="95.65" width="5.75" height="0.90" fill="#8cb9dd"/><rect x="13.84" y="95.65" width="0.51" height="0.90" fill="#dedede"/><rect class="k" x="9.25" y="96.80" width="3.13" height="0.90" fill="#8cb9dd"/><rect x="12.53" y="96.80" width="0.51" height="0.90" fill="#dedede"/><rect class="k" x="10.56" y="97.95" width="7.07" height="0.90" fill="#8cb9dd"/><rect x="17.78" y="97.95" width="0.51" height="0.90" fill="#dedede"/><rect x="19.09" y="97.95" width="2.47" height="0.90" fill="#d8b2a2"/><rect x="22.37" y="97.95" width="4.44" height="0.90" fill="#d8b2a2"/><rect x="27.62" y="97.95" width="8.38" height="0.90" fill="#d8b2a2"/><rect class="k" x="10.56" y="99.10" width="4.44" height="0.90" fill="#8cb9dd"/><rect x="15.15" y="99.10" width="0.51" height="0.90" fill="#dedede"/><rect class="k" x="11.87" y="100.25" width="10.35" height="0.90" fill="#8cb9dd"/><rect x="22.37" y="100.25" width="0.51" height="0.90" fill="#dedede"/><rect class="k" x="13.18" y="101.40" width="3.79" height="0.90" fill="#8cb9dd"/><rect x="17.12" y="101.40" width="0.51" height="0.90" fill="#dedede"/><rect class="k" x="14.50" y="102.55" width="2.47" height="0.90" fill="#8cb9dd"/><rect x="17.12" y="102.55" width="0.51" height="0.90" fill="#dedede"/><rect x="18.43" y="102.55" width="17.56" height="0.90" fill="#d8b2a2"/><rect class="k" x="9.25" y="103.70" width="3.13" height="0.90" fill="#8cb9dd"/><rect x="12.53" y="103.70" width="0.51" height="0.90" fill="#dedede"/><rect class="k" x="10.56" y="104.85" width="7.07" height="0.90" fill="#8cb9dd"/><rect x="17.78" y="104.85" width="0.51" height="0.90" fill="#dedede"/><rect x="19.09" y="104.85" width="4.44" height="0.90" fill="#d8b2a2"/><rect x="24.34" y="104.85" width="4.44" height="0.90" fill="#d8b2a2"/><rect x="29.58" y="104.85" width="3.13" height="0.90" fill="#d8b2a2"/><rect class="k" x="10.56" y="106.00" width="4.44" height="0.90" fill="#8cb9dd"/><rect x="15.15" y="106.00" width="0.51" height="0.90" fill="#dedede"/><rect class="k" x="11.87" y="107.15" width="10.35" height="0.90" fill="#8cb9dd"/><rect x="22.37" y="107.15" width="0.51" height="0.90" fill="#dedede"/><rect class="k" x="13.18" y="108.30" width="3.79" height="0.90" fill="#8cb9dd"/><rect x="17.12" y="108.30" width="0.51" height="0.90" fill="#dedede"/><rect class="k" x="14.50" y="109.45" width="2.47" height="0.90" fill="#8cb9dd"/><rect x="17.12" y="109.45" width="0.51" height="0.90" fill="#dedede"/><rect x="18.43" y="109.45" width="18.22" height="0.90" fill="#d8b2a2"/><rect class="k" x="9.25" y="110.60" width="3.13" height="0.90" fill="#8cb9dd"/><rect x="12.53" y="110.60" width="0.51" height="0.90" fill="#dedede"/><rect class="k" x="10.56" y="111.75" width="7.07" height="0.90" fill="#8cb9dd"/><rect x="17.78" y="111.75" width="0.51" height="0.90" fill="#dedede"/><rect x="19.09" y="111.75" width="5.10" height="0.90" fill="#d8b2a2"/><rect x="24.99" y="111.75" width="3.79" height="0.90" fill="#d8b2a2"/><rect x="29.58" y="111.75" width="3.79" height="0.90" fill="#d8b2a2"/><rect class="k" x="10.56" y="112.90" width="4.44" height="0.90" fill="#8cb9dd"/><rect x="15.15" y="112.90" width="0.51" height="0.90" fill="#dedede"/><rect class="k" x="11.87" y="114.05" width="10.35" height="0.90" fill="#8cb9dd"/><rect x="22.37" y="114.05" width="0.51" height="0.90" fill="#dedede"/><rect class="k" x="13.18" y="115.20" width="3.79" height="0.90" fill="#8cb9dd"/><rect x="17.12" y="115.20" width="0.51" height="0.90" fill="#dedede"/><rect class="k" x="14.50" y="116.35" width="2.47" height="0.90" fill="#8cb9dd"/><rect x="17.12" y="116.35" width="0.51" height="0.90" fill="#dedede"/><rect x="18.43" y="116.35" width="18.22" height="0.90" fill="#d8b2a2"/><rect class="k" x="6.62" y="117.50" width="1.82" height="0.90" fill="#8cb9dd"/><rect x="8.59" y="117.50" width="0.51" height="0.90" fill="#dedede"/><rect class="k" x="7.94" y="118.65" width="2.47" height="0.90" fill="#8cb9dd"/><rect x="10.56" y="118.65" width="0.51" height="0.90" fill="#dedede"/><rect x="9.25" y="119.80" width="0.51" height="0.90" fill="#dedede"/><rect x="10.56" y="119.80" width="2.47" height="0.90" fill="#d8b2a2"/><rect class="k" x="7.94" y="120.95" width="4.44" height="0.90" fill="#8cb9dd"/><rect x="12.53" y="120.95" width="0.51" height="0.90" fill="#dedede"/><rect x="13.84" y="120.95" width="5.10" height="0.90" fill="#d8b2a2"/><rect x="19.74" y="120.95" width="0.51" height="0.90" fill="#d8b2a2"/><rect x="21.06" y="120.95" width="2.47" height="0.90" fill="#d8b2a2"/><rect x="24.34" y="120.95" width="1.16" height="0.90" fill="#d8b2a2"/><rect x="26.30" y="120.95" width="3.13" height="0.90" fill="#d8b2a2"/><rect class="k" x="7.94" y="122.10" width="7.07" height="0.90" fill="#8cb9dd"/><rect x="15.15" y="122.10" width="0.51" height="0.90" fill="#dedede"/><rect x="16.46" y="122.10" width="5.10" height="0.90" fill="#d8b2a2"/><rect x="22.37" y="122.10" width="0.51" height="0.90" fill="#d8b2a2"/><rect x="23.68" y="122.10" width="5.75" height="0.90" fill="#d8b2a2"/><rect x="30.24" y="122.10" width="2.47" height="0.90" fill="#d8b2a2"/><rect x="33.52" y="122.10" width="1.16" height="0.90" fill="#d8b2a2"/><rect x="35.49" y="122.10" width="3.79" height="0.90" fill="#d8b2a2"/><rect x="40.08" y="122.10" width="4.44" height="0.90" fill="#d8b2a2"/><rect x="45.33" y="122.10" width="1.82" height="0.90" fill="#d8b2a2"/><rect x="47.95" y="122.10" width="2.47" height="0.90" fill="#d8b2a2"/><rect x="51.23" y="122.10" width="3.79" height="0.90" fill="#d8b2a2"/><rect x="55.82" y="122.10" width="1.82" height="0.90" fill="#d8b2a2"/><rect x="58.45" y="122.10" width="3.13" height="0.90" fill="#d8b2a2"/><rect x="62.38" y="122.10" width="1.82" height="0.90" fill="#d8b2a2"/><rect x="65.01" y="122.10" width="3.13" height="0.90" fill="#d8b2a2"/><rect class="k" x="7.94" y="123.25" width="6.41" height="0.90" fill="#8cb9dd"/><rect x="14.50" y="123.25" width="0.51" height="0.90" fill="#dedede"/><rect x="9.25" y="124.40" width="0.51" height="0.90" fill="#dedede"/><rect class="k" x="10.56" y="124.40" width="3.79" height="0.90" fill="#8cb9dd"/><rect x="14.50" y="124.40" width="0.51" height="0.90" fill="#dedede"/><rect class="k" x="11.87" y="125.55" width="2.47" height="0.90" fill="#8cb9dd"/><rect x="14.50" y="125.55" width="0.51" height="0.90" fill="#dedede"/><rect x="15.81" y="125.55" width="3.79" height="0.90" fill="#d8b2a2"/><rect class="k" x="11.87" y="126.70" width="5.75" height="0.90" fill="#8cb9dd"/><rect x="17.78" y="126.70" width="0.51" height="0.90" fill="#dedede"/><rect x="19.09" y="126.70" width="0.51" height="0.90" fill="#c8d8c0"/><rect class="k" x="11.87" y="127.85" width="4.44" height="0.90" fill="#8cb9dd"/><rect x="16.46" y="127.85" width="0.51" height="0.90" fill="#dedede"/><rect x="17.78" y="127.85" width="1.82" height="0.90" fill="#d8b2a2"/><rect class="k" x="10.56" y="129.00" width="5.10" height="0.90" fill="#8cb9dd"/><rect x="15.81" y="129.00" width="0.51" height="0.90" fill="#dedede"/><rect class="k" x="17.12" y="129.00" width="3.13" height="0.90" fill="#8cb9dd"/><rect class="k" x="10.56" y="130.15" width="2.47" height="0.90" fill="#8cb9dd"/><rect x="13.18" y="130.15" width="0.51" height="0.90" fill="#dedede"/><rect x="14.50" y="130.15" width="2.47" height="0.90" fill="#d8b2a2"/><rect class="k" x="10.56" y="131.30" width="1.16" height="0.90" fill="#8cb9dd"/><rect x="11.87" y="131.30" width="0.51" height="0.90" fill="#dedede"/><rect x="13.18" y="131.30" width="3.13" height="0.90" fill="#d8b2a2"/><rect x="9.25" y="132.45" width="0.51" height="0.90" fill="#dedede"/><rect class="k" x="10.56" y="132.45" width="3.79" height="0.90" fill="#8cb9dd"/><rect x="14.50" y="132.45" width="0.51" height="0.90" fill="#dedede"/><rect class="k" x="11.87" y="133.60" width="2.47" height="0.90" fill="#8cb9dd"/><rect x="14.50" y="133.60" width="0.51" height="0.90" fill="#dedede"/><rect x="15.81" y="133.60" width="3.79" height="0.90" fill="#d8b2a2"/><rect class="k" x="11.87" y="134.75" width="5.75" height="0.90" fill="#8cb9dd"/><rect x="17.78" y="134.75" width="0.51" height="0.90" fill="#dedede"/><rect x="19.09" y="134.75" width="0.51" height="0.90" fill="#c8d8c0"/><rect class="k" x="11.87" y="135.90" width="4.44" height="0.90" fill="#8cb9dd"/><rect x="16.46" y="135.90" width="0.51" height="0.90" fill="#dedede"/><rect x="17.78" y="135.90" width="2.47" height="0.90" fill="#d8b2a2"/><rect class="k" x="10.56" y="137.05" width="5.10" height="0.90" fill="#8cb9dd"/><rect x="15.81" y="137.05" width="0.51" height="0.90" fill="#dedede"/><rect class="k" x="17.12" y="137.05" width="3.13" height="0.90" fill="#8cb9dd"/><rect class="k" x="10.56" y="138.20" width="2.47" height="0.90" fill="#8cb9dd"/><rect x="13.18" y="138.20" width="0.51" height="0.90" fill="#dedede"/><rect x="14.50" y="138.20" width="3.13" height="0.90" fill="#d8b2a2"/><rect class="k" x="10.56" y="139.35" width="1.16" height="0.90" fill="#8cb9dd"/><rect x="11.87" y="139.35" width="0.51" height="0.90" fill="#dedede"/><rect x="13.18" y="139.35" width="3.13" height="0.90" fill="#d8b2a2"/><rect class="k" x="7.94" y="140.50" width="5.75" height="0.90" fill="#8cb9dd"/><rect x="13.84" y="140.50" width="0.51" height="0.90" fill="#dedede"/><rect class="k" x="9.25" y="141.65" width="3.13" height="0.90" fill="#8cb9dd"/><rect x="12.53" y="141.65" width="0.51" height="0.90" fill="#dedede"/><rect class="k" x="10.56" y="142.80" width="7.07" height="0.90" fill="#8cb9dd"/><rect x="17.78" y="142.80" width="0.51" height="0.90" fill="#dedede"/><rect x="19.09" y="142.80" width="6.41" height="0.90" fill="#d8b2a2"/><rect x="26.30" y="142.80" width="5.75" height="0.90" fill="#d8b2a2"/><rect x="32.86" y="142.80" width="1.16" height="0.90" fill="#d8b2a2"/><rect x="34.83" y="142.80" width="3.79" height="0.90" fill="#d8b2a2"/><rect class="k" x="10.56" y="143.95" width="4.44" height="0.90" fill="#8cb9dd"/><rect x="15.15" y="143.95" width="0.51" height="0.90" fill="#dedede"/><rect class="k" x="11.87" y="145.10" width="10.35" height="0.90" fill="#8cb9dd"/><rect x="22.37" y="145.10" width="0.51" height="0.90" fill="#dedede"/><rect class="k" x="13.18" y="146.25" width="3.79" height="0.90" fill="#8cb9dd"/><rect x="17.12" y="146.25" width="0.51" height="0.90" fill="#dedede"/><rect class="k" x="14.50" y="147.40" width="2.47" height="0.90" fill="#8cb9dd"/><rect x="17.12" y="147.40" width="0.51" height="0.90" fill="#dedede"/><rect x="18.43" y="147.40" width="3.13" height="0.90" fill="#d8b2a2"/><rect class="k" x="14.50" y="148.55" width="3.13" height="0.90" fill="#8cb9dd"/><rect x="17.78" y="148.55" width="0.51" height="0.90" fill="#dedede"/><rect class="k" x="15.81" y="149.70" width="2.47" height="0.90" fill="#8cb9dd"/><rect x="18.43" y="149.70" width="0.51" height="0.90" fill="#dedede"/><rect x="19.74" y="149.70" width="17.56" height="0.90" fill="#d8b2a2"/><rect class="k" x="9.25" y="150.85" width="3.13" height="0.90" fill="#8cb9dd"/><rect x="12.53" y="150.85" width="0.51" height="0.90" fill="#dedede"/><rect class="k" x="10.56" y="152.00" width="7.07" height="0.90" fill="#8cb9dd"/><rect x="17.78" y="152.00" width="0.51" height="0.90" fill="#dedede"/><rect x="19.09" y="152.00" width="5.10" height="0.90" fill="#d8b2a2"/><rect x="24.99" y="152.00" width="3.79" height="0.90" fill="#d8b2a2"/><rect x="29.58" y="152.00" width="3.79" height="0.90" fill="#d8b2a2"/><rect class="k" x="10.56" y="153.15" width="4.44" height="0.90" fill="#8cb9dd"/><rect x="15.15" y="153.15" width="0.51" height="0.90" fill="#dedede"/><rect class="k" x="11.87" y="154.30" width="10.35" height="0.90" fill="#8cb9dd"/><rect x="22.37" y="154.30" width="0.51" height="0.90" fill="#dedede"/><rect class="k" x="13.18" y="155.45" width="3.79" height="0.90" fill="#8cb9dd"/><rect x="17.12" y="155.45" width="0.51" height="0.90" fill="#dedede"/><rect class="k" x="14.50" y="156.60" width="2.47" height="0.90" fill="#8cb9dd"/><rect x="17.12" y="156.60" width="0.51" height="0.90" fill="#dedede"/><rect x="18.43" y="156.60" width="18.22" height="0.90" fill="#d8b2a2"/><rect class="k" x="5.31" y="157.75" width="7.07" height="0.90" fill="#8cb9dd"/><rect x="12.53" y="157.75" width="0.51" height="0.90" fill="#dedede"/><rect class="k" x="6.62" y="158.90" width="1.82" height="0.90" fill="#8cb9dd"/><rect x="8.59" y="158.90" width="0.51" height="0.90" fill="#dedede"/><rect class="k" x="7.94" y="160.05" width="2.47" height="0.90" fill="#8cb9dd"/><rect x="10.56" y="160.05" width="0.51" height="0.90" fill="#dedede"/><rect x="9.25" y="161.20" width="0.51" height="0.90" fill="#dedede"/><rect x="10.56" y="161.20" width="2.47" height="0.90" fill="#d8b2a2"/><rect class="k" x="7.94" y="162.35" width="4.44" height="0.90" fill="#8cb9dd"/><rect x="12.53" y="162.35" width="0.51" height="0.90" fill="#dedede"/><rect x="13.84" y="162.35" width="3.79" height="0.90" fill="#d8b2a2"/><rect x="18.43" y="162.35" width="1.16" height="0.90" fill="#d8b2a2"/><rect x="20.40" y="162.35" width="5.10" height="0.90" fill="#d8b2a2"/><rect x="26.30" y="162.35" width="2.47" height="0.90" fill="#d8b2a2"/><rect class="k" x="7.94" y="163.50" width="7.07" height="0.90" fill="#8cb9dd"/><rect x="15.15" y="163.50" width="0.51" height="0.90" fill="#dedede"/><rect x="16.46" y="163.50" width="3.79" height="0.90" fill="#d8b2a2"/><rect x="21.06" y="163.50" width="1.82" height="0.90" fill="#d8b2a2"/><rect x="23.68" y="163.50" width="4.44" height="0.90" fill="#d8b2a2"/><rect x="28.93" y="163.50" width="1.16" height="0.90" fill="#d8b2a2"/><rect x="30.90" y="163.50" width="1.16" height="0.90" fill="#d8b2a2"/><rect x="32.86" y="163.50" width="5.10" height="0.90" fill="#d8b2a2"/><rect x="38.77" y="163.50" width="2.47" height="0.90" fill="#d8b2a2"/><rect x="42.05" y="163.50" width="6.41" height="0.90" fill="#d8b2a2"/><rect x="49.26" y="163.50" width="1.16" height="0.90" fill="#d8b2a2"/><rect x="51.23" y="163.50" width="1.82" height="0.90" fill="#d8b2a2"/><rect x="53.86" y="163.50" width="3.79" height="0.90" fill="#d8b2a2"/><rect x="58.45" y="163.50" width="1.82" height="0.90" fill="#d8b2a2"/><rect class="k" x="7.94" y="164.65" width="6.41" height="0.90" fill="#8cb9dd"/><rect x="14.50" y="164.65" width="0.51" height="0.90" fill="#dedede"/><rect x="9.25" y="165.80" width="0.51" height="0.90" fill="#dedede"/><rect class="k" x="10.56" y="165.80" width="3.79" height="0.90" fill="#8cb9dd"/><rect x="14.50" y="165.80" width="0.51" height="0.90" fill="#dedede"/><rect class="k" x="11.87" y="166.95" width="2.47" height="0.90" fill="#8cb9dd"/><rect x="14.50" y="166.95" width="0.51" height="0.90" fill="#dedede"/><rect x="15.81" y="166.95" width="3.79" height="0.90" fill="#d8b2a2"/><rect class="k" x="11.87" y="168.10" width="3.79" height="0.90" fill="#8cb9dd"/><rect x="15.81" y="168.10" width="0.51" height="0.90" fill="#dedede"/><rect x="17.12" y="168.10" width="2.47" height="0.90" fill="#d8b2a2"/><rect class="k" x="10.56" y="169.25" width="5.10" height="0.90" fill="#8cb9dd"/><rect x="15.81" y="169.25" width="0.51" height="0.90" fill="#dedede"/><rect class="k" x="17.12" y="169.25" width="2.47" height="0.90" fill="#8cb9dd"/><rect class="k" x="10.56" y="170.40" width="2.47" height="0.90" fill="#8cb9dd"/><rect x="13.18" y="170.40" width="0.51" height="0.90" fill="#dedede"/><rect x="14.50" y="170.40" width="1.16" height="0.90" fill="#d8b2a2"/><rect class="k" x="10.56" y="171.55" width="1.16" height="0.90" fill="#8cb9dd"/><rect x="11.87" y="171.55" width="0.51" height="0.90" fill="#dedede"/><rect x="13.18" y="171.55" width="2.47" height="0.90" fill="#d8b2a2"/><rect class="k" x="7.94" y="172.70" width="7.07" height="0.90" fill="#8cb9dd"/><rect x="15.15" y="172.70" width="0.51" height="0.90" fill="#dedede"/><rect class="k" x="9.25" y="173.85" width="5.10" height="0.90" fill="#8cb9dd"/><rect x="14.50" y="173.85" width="0.51" height="0.90" fill="#dedede"/><rect class="k" x="15.81" y="173.85" width="2.47" height="0.90" fill="#8cb9dd"/><rect class="k" x="9.25" y="175.00" width="4.44" height="0.90" fill="#8cb9dd"/><rect x="13.84" y="175.00" width="0.51" height="0.90" fill="#dedede"/><rect class="k" x="10.56" y="176.15" width="10.35" height="0.90" fill="#8cb9dd"/><rect x="21.06" y="176.15" width="0.51" height="0.90" fill="#dedede"/><rect class="k" x="11.87" y="177.30" width="3.79" height="0.90" fill="#8cb9dd"/><rect x="15.81" y="177.30" width="0.51" height="0.90" fill="#dedede"/><rect class="k" x="13.18" y="178.45" width="2.47" height="0.90" fill="#8cb9dd"/><rect x="15.81" y="178.45" width="0.51" height="0.90" fill="#dedede"/><rect x="17.12" y="178.45" width="3.79" height="0.90" fill="#d8b2a2"/><rect class="k" x="13.18" y="179.60" width="6.41" height="0.90" fill="#8cb9dd"/><rect x="19.74" y="179.60" width="0.51" height="0.90" fill="#dedede"/><rect class="k" x="14.50" y="180.75" width="2.47" height="0.90" fill="#8cb9dd"/><rect x="17.12" y="180.75" width="0.51" height="0.90" fill="#dedede"/><rect class="k" x="15.81" y="181.90" width="2.47" height="0.90" fill="#8cb9dd"/><rect x="18.43" y="181.90" width="0.51" height="0.90" fill="#dedede"/><rect x="19.74" y="181.90" width="3.79" height="0.90" fill="#d8b2a2"/><rect class="k" x="15.81" y="183.05" width="5.75" height="0.90" fill="#8cb9dd"/><rect x="21.71" y="183.05" width="0.51" height="0.90" fill="#dedede"/><rect x="23.02" y="183.05" width="0.51" height="0.90" fill="#c8d8c0"/><rect class="k" x="15.81" y="184.20" width="5.75" height="0.90" fill="#8cb9dd"/><rect x="21.71" y="184.20" width="0.51" height="0.90" fill="#dedede"/><rect x="23.02" y="184.20" width="1.82" height="0.90" fill="#c8d8c0"/><rect class="k" x="13.18" y="185.35" width="5.10" height="0.90" fill="#8cb9dd"/><rect x="18.43" y="185.35" width="0.51" height="0.90" fill="#dedede"/><rect x="14.50" y="186.50" width="0.51" height="0.90" fill="#dedede"/><rect x="15.81" y="186.50" width="2.47" height="0.90" fill="#d8b2a2"/><rect class="k" x="7.94" y="187.65" width="5.75" height="0.90" fill="#8cb9dd"/><rect x="13.84" y="187.65" width="0.51" height="0.90" fill="#dedede"/><rect class="k" x="9.25" y="188.80" width="3.13" height="0.90" fill="#8cb9dd"/><rect x="12.53" y="188.80" width="0.51" height="0.90" fill="#dedede"/><rect class="k" x="10.56" y="189.95" width="7.07" height="0.90" fill="#8cb9dd"/><rect x="17.78" y="189.95" width="0.51" height="0.90" fill="#dedede"/><rect x="19.09" y="189.95" width="2.47" height="0.90" fill="#d8b2a2"/><rect x="22.37" y="189.95" width="4.44" height="0.90" fill="#d8b2a2"/><rect x="27.62" y="189.95" width="8.38" height="0.90" fill="#d8b2a2"/><rect class="k" x="9.25" y="191.10" width="3.13" height="0.90" fill="#8cb9dd"/><rect x="12.53" y="191.10" width="0.51" height="0.90" fill="#dedede"/><rect class="k" x="10.56" y="192.25" width="7.07" height="0.90" fill="#8cb9dd"/><rect x="17.78" y="192.25" width="0.51" height="0.90" fill="#dedede"/><rect x="19.09" y="192.25" width="4.44" height="0.90" fill="#d8b2a2"/><rect x="24.34" y="192.25" width="4.44" height="0.90" fill="#d8b2a2"/><rect x="29.58" y="192.25" width="3.13" height="0.90" fill="#d8b2a2"/><rect class="k" x="10.56" y="193.40" width="4.44" height="0.90" fill="#8cb9dd"/><rect x="15.15" y="193.40" width="0.51" height="0.90" fill="#dedede"/><rect class="k" x="11.87" y="194.55" width="10.35" height="0.90" fill="#8cb9dd"/><rect x="22.37" y="194.55" width="0.51" height="0.90" fill="#dedede"/><rect class="k" x="13.18" y="195.70" width="3.79" height="0.90" fill="#8cb9dd"/><rect x="17.12" y="195.70" width="0.51" height="0.90" fill="#dedede"/><rect class="k" x="14.50" y="196.85" width="2.47" height="0.90" fill="#8cb9dd"/><rect x="17.12" y="196.85" width="0.51" height="0.90" fill="#dedede"/><rect x="18.43" y="196.85" width="18.22" height="0.90" fill="#d8b2a2"/><rect class="k" x="9.25" y="198.00" width="3.13" height="0.90" fill="#8cb9dd"/><rect x="12.53" y="198.00" width="0.51" height="0.90" fill="#dedede"/><rect class="k" x="10.56" y="199.15" width="7.07" height="0.90" fill="#8cb9dd"/><rect x="17.78" y="199.15" width="0.51" height="0.90" fill="#dedede"/><rect x="19.09" y="199.15" width="2.47" height="0.90" fill="#d8b2a2"/><rect x="22.37" y="199.15" width="1.82" height="0.90" fill="#d8b2a2"/><rect x="24.99" y="199.15" width="3.79" height="0.90" fill="#d8b2a2"/><rect class="k" x="10.56" y="200.30" width="4.44" height="0.90" fill="#8cb9dd"/><rect x="15.15" y="200.30" width="0.51" height="0.90" fill="#dedede"/><rect class="k" x="11.87" y="201.45" width="10.35" height="0.90" fill="#8cb9dd"/><rect x="22.37" y="201.45" width="0.51" height="0.90" fill="#dedede"/><rect class="k" x="13.18" y="202.60" width="3.79" height="0.90" fill="#8cb9dd"/><rect x="17.12" y="202.60" width="0.51" height="0.90" fill="#dedede"/><rect class="k" x="14.50" y="203.75" width="2.47" height="0.90" fill="#8cb9dd"/><rect x="17.12" y="203.75" width="0.51" height="0.90" fill="#dedede"/><rect x="18.43" y="203.75" width="18.22" height="0.90" fill="#d8b2a2"/><rect class="k" x="6.62" y="204.90" width="1.82" height="0.90" fill="#8cb9dd"/><rect x="8.59" y="204.90" width="0.51" height="0.90" fill="#dedede"/><rect class="k" x="7.94" y="206.05" width="2.47" height="0.90" fill="#8cb9dd"/><rect x="10.56" y="206.05" width="0.51" height="0.90" fill="#dedede"/><rect x="9.25" y="207.20" width="0.51" height="0.90" fill="#dedede"/><rect x="10.56" y="207.20" width="2.47" height="0.90" fill="#d8b2a2"/><rect class="k" x="7.94" y="208.35" width="4.44" height="0.90" fill="#8cb9dd"/><rect x="12.53" y="208.35" width="0.51" height="0.90" fill="#dedede"/><rect x="13.84" y="208.35" width="5.10" height="0.90" fill="#d8b2a2"/><rect x="19.74" y="208.35" width="0.51" height="0.90" fill="#d8b2a2"/><rect x="21.06" y="208.35" width="2.47" height="0.90" fill="#d8b2a2"/><rect class="k" x="7.94" y="209.50" width="7.07" height="0.90" fill="#8cb9dd"/><rect x="15.15" y="209.50" width="0.51" height="0.90" fill="#dedede"/><rect x="16.46" y="209.50" width="5.10" height="0.90" fill="#d8b2a2"/><rect x="22.37" y="209.50" width="0.51" height="0.90" fill="#d8b2a2"/><rect x="23.68" y="209.50" width="3.79" height="0.90" fill="#d8b2a2"/><rect x="28.27" y="209.50" width="2.47" height="0.90" fill="#d8b2a2"/><rect x="31.55" y="209.50" width="6.41" height="0.90" fill="#d8b2a2"/><rect x="38.77" y="209.50" width="1.16" height="0.90" fill="#d8b2a2"/><rect x="40.74" y="209.50" width="1.82" height="0.90" fill="#d8b2a2"/><rect x="43.36" y="209.50" width="3.79" height="0.90" fill="#d8b2a2"/><rect x="47.95" y="209.50" width="1.82" height="0.90" fill="#d8b2a2"/><rect class="k" x="7.94" y="210.65" width="6.41" height="0.90" fill="#8cb9dd"/><rect x="14.50" y="210.65" width="0.51" height="0.90" fill="#dedede"/><rect x="9.25" y="211.80" width="0.51" height="0.90" fill="#dedede"/><rect class="k" x="10.56" y="211.80" width="3.79" height="0.90" fill="#8cb9dd"/><rect x="14.50" y="211.80" width="0.51" height="0.90" fill="#dedede"/><rect class="k" x="11.87" y="212.95" width="2.47" height="0.90" fill="#8cb9dd"/><rect x="14.50" y="212.95" width="0.51" height="0.90" fill="#dedede"/><rect x="15.81" y="212.95" width="3.79" height="0.90" fill="#d8b2a2"/><rect class="k" x="11.87" y="214.10" width="3.79" height="0.90" fill="#8cb9dd"/><rect x="15.81" y="214.10" width="0.51" height="0.90" fill="#dedede"/><rect x="17.12" y="214.10" width="2.47" height="0.90" fill="#d8b2a2"/><rect class="k" x="10.56" y="215.25" width="5.10" height="0.90" fill="#8cb9dd"/><rect x="15.81" y="215.25" width="0.51" height="0.90" fill="#dedede"/><rect class="k" x="17.12" y="215.25" width="2.47" height="0.90" fill="#8cb9dd"/><rect class="k" x="10.56" y="216.40" width="2.47" height="0.90" fill="#8cb9dd"/><rect x="13.18" y="216.40" width="0.51" height="0.90" fill="#dedede"/><rect x="14.50" y="216.40" width="1.16" height="0.90" fill="#d8b2a2"/><rect class="k" x="10.56" y="217.55" width="1.16" height="0.90" fill="#8cb9dd"/><rect x="11.87" y="217.55" width="0.51" height="0.90" fill="#dedede"/><rect x="13.18" y="217.55" width="2.47" height="0.90" fill="#d8b2a2"/><rect class="k" x="7.94" y="218.70" width="5.75" height="0.90" fill="#8cb9dd"/><rect x="13.84" y="218.70" width="0.51" height="0.90" fill="#dedede"/><rect class="k" x="9.25" y="219.85" width="3.13" height="0.90" fill="#8cb9dd"/><rect x="12.53" y="219.85" width="0.51" height="0.90" fill="#dedede"/><rect class="k" x="10.56" y="221.00" width="7.07" height="0.90" fill="#8cb9dd"/><rect x="17.78" y="221.00" width="0.51" height="0.90" fill="#dedede"/><rect x="19.09" y="221.00" width="6.41" height="0.90" fill="#d8b2a2"/><rect x="26.30" y="221.00" width="5.75" height="0.90" fill="#d8b2a2"/><rect x="32.86" y="221.00" width="1.16" height="0.90" fill="#d8b2a2"/><rect x="34.83" y="221.00" width="1.82" height="0.90" fill="#d8b2a2"/><rect x="37.46" y="221.00" width="3.13" height="0.90" fill="#d8b2a2"/><rect class="k" x="10.56" y="222.15" width="4.44" height="0.90" fill="#8cb9dd"/><rect x="15.15" y="222.15" width="0.51" height="0.90" fill="#dedede"/><rect class="k" x="11.87" y="223.30" width="10.35" height="0.90" fill="#8cb9dd"/><rect x="22.37" y="223.30" width="0.51" height="0.90" fill="#dedede"/><rect class="k" x="13.18" y="224.45" width="3.79" height="0.90" fill="#8cb9dd"/><rect x="17.12" y="224.45" width="0.51" height="0.90" fill="#dedede"/><rect class="k" x="14.50" y="225.60" width="2.47" height="0.90" fill="#8cb9dd"/><rect x="17.12" y="225.60" width="0.51" height="0.90" fill="#dedede"/><rect x="18.43" y="225.60" width="17.56" height="0.90" fill="#d8b2a2"/><rect class="k" x="6.62" y="226.75" width="3.79" height="0.90" fill="#8cb9dd"/><rect x="10.56" y="226.75" width="0.51" height="0.90" fill="#dedede"/><rect class="k" x="7.94" y="227.90" width="2.47" height="0.90" fill="#8cb9dd"/><rect x="10.56" y="227.90" width="0.51" height="0.90" fill="#dedede"/><rect x="9.25" y="229.05" width="0.51" height="0.90" fill="#dedede"/><rect x="10.56" y="229.05" width="2.47" height="0.90" fill="#d8b2a2"/><rect class="k" x="7.94" y="230.20" width="4.44" height="0.90" fill="#8cb9dd"/><rect x="12.53" y="230.20" width="0.51" height="0.90" fill="#dedede"/><rect x="13.84" y="230.20" width="3.79" height="0.90" fill="#d8b2a2"/><rect x="18.43" y="230.20" width="0.51" height="0.90" fill="#d8b2a2"/><rect x="19.74" y="230.20" width="2.47" height="0.90" fill="#d8b2a2"/><rect class="k" x="7.94" y="231.35" width="7.07" height="0.90" fill="#8cb9dd"/><rect x="15.15" y="231.35" width="0.51" height="0.90" fill="#dedede"/><rect x="16.46" y="231.35" width="3.79" height="0.90" fill="#d8b2a2"/><rect x="21.06" y="231.35" width="1.16" height="0.90" fill="#d8b2a2"/><rect x="23.02" y="231.35" width="5.10" height="0.90" fill="#d8b2a2"/><rect x="28.93" y="231.35" width="2.47" height="0.90" fill="#d8b2a2"/><rect x="32.21" y="231.35" width="6.41" height="0.90" fill="#d8b2a2"/><rect x="39.42" y="231.35" width="1.16" height="0.90" fill="#d8b2a2"/><rect x="41.39" y="231.35" width="1.82" height="0.90" fill="#d8b2a2"/><rect x="44.02" y="231.35" width="3.79" height="0.90" fill="#d8b2a2"/><rect x="48.61" y="231.35" width="1.82" height="0.90" fill="#d8b2a2"/><rect class="k" x="7.94" y="232.50" width="6.41" height="0.90" fill="#8cb9dd"/><rect x="14.50" y="232.50" width="0.51" height="0.90" fill="#dedede"/><rect x="9.25" y="233.65" width="0.51" height="0.90" fill="#dedede"/><rect class="k" x="10.56" y="233.65" width="3.79" height="0.90" fill="#8cb9dd"/><rect x="14.50" y="233.65" width="0.51" height="0.90" fill="#dedede"/><rect class="k" x="11.87" y="234.80" width="2.47" height="0.90" fill="#8cb9dd"/><rect x="14.50" y="234.80" width="0.51" height="0.90" fill="#dedede"/><rect x="15.81" y="234.80" width="3.79" height="0.90" fill="#d8b2a2"/><rect class="k" x="11.87" y="235.95" width="3.79" height="0.90" fill="#8cb9dd"/><rect x="15.81" y="235.95" width="0.51" height="0.90" fill="#dedede"/><rect x="17.12" y="235.95" width="2.47" height="0.90" fill="#d8b2a2"/><rect class="k" x="10.56" y="237.10" width="5.10" height="0.90" fill="#8cb9dd"/><rect x="15.81" y="237.10" width="0.51" height="0.90" fill="#dedede"/><rect class="k" x="17.12" y="237.10" width="2.47" height="0.90" fill="#8cb9dd"/><rect class="k" x="10.56" y="238.25" width="2.47" height="0.90" fill="#8cb9dd"/><rect x="13.18" y="238.25" width="0.51" height="0.90" fill="#dedede"/><rect x="14.50" y="238.25" width="1.16" height="0.90" fill="#d8b2a2"/><rect class="k" x="10.56" y="239.40" width="1.16" height="0.90" fill="#8cb9dd"/><rect x="11.87" y="239.40" width="0.51" height="0.90" fill="#dedede"/><rect x="13.18" y="239.40" width="2.47" height="0.90" fill="#d8b2a2"/><rect class="k" x="7.94" y="240.55" width="5.75" height="0.90" fill="#8cb9dd"/><rect x="13.84" y="240.55" width="0.51" height="0.90" fill="#dedede"/><rect class="k" x="9.25" y="241.70" width="3.13" height="0.90" fill="#8cb9dd"/><rect x="12.53" y="241.70" width="0.51" height="0.90" fill="#dedede"/><rect class="k" x="10.56" y="242.85" width="7.07" height="0.90" fill="#8cb9dd"/><rect x="17.78" y="242.85" width="0.51" height="0.90" fill="#dedede"/><rect x="19.09" y="242.85" width="2.47" height="0.90" fill="#d8b2a2"/><rect x="22.37" y="242.85" width="4.44" height="0.90" fill="#d8b2a2"/><rect x="27.62" y="242.85" width="8.38" height="0.90" fill="#d8b2a2"/><rect class="k" x="9.25" y="244.00" width="3.13" height="0.90" fill="#8cb9dd"/><rect x="12.53" y="244.00" width="0.51" height="0.90" fill="#dedede"/><rect class="k" x="10.56" y="245.15" width="7.07" height="0.90" fill="#8cb9dd"/><rect x="17.78" y="245.15" width="0.51" height="0.90" fill="#dedede"/><rect x="19.09" y="245.15" width="2.47" height="0.90" fill="#d8b2a2"/><rect x="22.37" y="245.15" width="1.82" height="0.90" fill="#d8b2a2"/><rect x="24.99" y="245.15" width="3.79" height="0.90" fill="#d8b2a2"/><rect class="k" x="10.56" y="246.30" width="4.44" height="0.90" fill="#8cb9dd"/><rect x="15.15" y="246.30" width="0.51" height="0.90" fill="#dedede"/><rect class="k" x="11.87" y="247.45" width="10.35" height="0.90" fill="#8cb9dd"/><rect x="22.37" y="247.45" width="0.51" height="0.90" fill="#dedede"/><rect class="k" x="13.18" y="248.60" width="3.79" height="0.90" fill="#8cb9dd"/><rect x="17.12" y="248.60" width="0.51" height="0.90" fill="#dedede"/><rect class="k" x="14.50" y="249.75" width="2.47" height="0.90" fill="#8cb9dd"/><rect x="17.12" y="249.75" width="0.51" height="0.90" fill="#dedede"/><rect x="18.43" y="249.75" width="18.22" height="0.90" fill="#d8b2a2"/><rect class="k" x="9.25" y="250.90" width="3.13" height="0.90" fill="#8cb9dd"/><rect x="12.53" y="250.90" width="0.51" height="0.90" fill="#dedede"/><rect class="k" x="10.56" y="252.05" width="7.07" height="0.90" fill="#8cb9dd"/><rect x="17.78" y="252.05" width="0.51" height="0.90" fill="#dedede"/><rect x="19.09" y="252.05" width="5.10" height="0.90" fill="#d8b2a2"/><rect x="24.99" y="252.05" width="3.79" height="0.90" fill="#d8b2a2"/><rect x="29.58" y="252.05" width="3.79" height="0.90" fill="#d8b2a2"/><rect class="k" x="10.56" y="253.20" width="4.44" height="0.90" fill="#8cb9dd"/><rect x="15.15" y="253.20" width="0.51" height="0.90" fill="#dedede"/><rect class="k" x="11.87" y="254.35" width="10.35" height="0.90" fill="#8cb9dd"/><rect x="22.37" y="254.35" width="0.51" height="0.90" fill="#dedede"/><rect class="k" x="13.18" y="255.50" width="3.79" height="0.90" fill="#8cb9dd"/><rect x="17.12" y="255.50" width="0.51" height="0.90" fill="#dedede"/><rect class="k" x="14.50" y="256.65" width="2.47" height="0.90" fill="#8cb9dd"/><rect x="17.12" y="256.65" width="0.51" height="0.90" fill="#dedede"/><rect x="18.43" y="256.65" width="18.22" height="0.90" fill="#d8b2a2"/></svg>
  <div class="mk" style="left:587px;top:234.8px;width:11.5px"></div>
  <div class="div"></div>
  <div class="gut" style="left:599px;width:30.5px"><div class="n">1</div><div class="n">2</div><div class="n">3</div><div class="n">4</div><div class="n">5</div><div class="n">6</div><div class="n">7</div><div class="n">8</div><div class="n">9</div><div class="n">10</div><div class="n">11</div><div class="n">12</div><div class="n">13</div><div class="n">14</div><div class="n">15</div><div class="n">16</div><div class="n">17</div><div class="n">18</div><div class="n">19</div><div class="n">20</div><div class="n">21</div><div class="n">22</div><div class="n">23</div><div class="n">24</div><div class="n">25</div><div class="n">26</div><div class="n">27</div><div class="n">28</div><div class="n">29</div><div class="n">30</div><div class="n">31</div><div class="n">32</div><div class="n">33</div><div class="n">34</div><div class="n">35</div><div class="n">36</div><div class="n">37</div><div class="n">38</div><div class="n">39</div><div class="n">40</div><div class="n">41</div><div class="n">42</div><div class="n">43</div><div class="n">44</div><div class="n">45</div><div class="n">46</div><div class="n">47</div><div class="n">48</div><div class="n">49</div><div class="n">50</div><div class="n">51</div></div>
  <div class="code" style="left:652.6px"><div class="l"><span style="color:#c88fc3">import</span> <span class="b" style="color:#ffd700">{</span> <span style="color:#a3dcfb">createRoute</span><span style="color:#d8d8d8">,</span> <span style="color:#a3dcfb">z</span> <span class="b" style="color:#ffd700">}</span> <span style="color:#c88fc3">from</span> <span style="color:#d09982">&#x27;@hono/zod-openapi&#x27;</span></div><div class="l">&#8203;</div><div class="l"><span style="color:#64a3d7">const</span> <span style="color:#5ec4fc">ErrorSchema</span> <span style="color:#d8d8d8">=</span> <span style="color:#a3dcfb">z</span><span style="color:#d8d8d8">.</span><span style="color:#dcdcb0">object</span><span class="b" style="color:#ffd700">(</span><span class="b" style="color:#da70d6">{</span> <span style="color:#a3dcfb">message</span><span style="color:#d8d8d8">:</span> <span style="color:#a3dcfb">z</span><span style="color:#d8d8d8">.</span><span style="color:#dcdcb0">string</span><span class="b" style="color:rgba(23,159,255,.85)">(</span><span class="b" style="color:rgba(23,159,255,.85)">)</span> <span class="b" style="color:#da70d6">}</span><span class="b" style="color:#ffd700">)</span><span style="color:#d8d8d8">.</span><span style="color:#dcdcb0">openapi</span><span class="b" style="color:#ffd700">(</span><span style="color:#d09982">&#x27;Error&#x27;</span><span class="b" style="color:#ffd700">)</span></div><div class="l">&#8203;</div><div class="l"><span style="color:#64a3d7">const</span> <span style="color:#5ec4fc">PostSchema</span> <span style="color:#d8d8d8">=</span> <span style="color:#a3dcfb">z</span></div><div class="l"><i class="g" style="left:-0.50px"></i>  <span style="color:#d8d8d8">.</span><span style="color:#dcdcb0">object</span><span class="b" style="color:#ffd700">(</span><span class="b" style="color:#da70d6">{</span></div><div class="l"><i class="g" style="left:-0.50px"></i><i class="g" style="left:11.22px"></i>    <span style="color:#a3dcfb">id</span><span style="color:#d8d8d8">:</span> <span style="color:#a3dcfb">z</span><span style="color:#d8d8d8">.</span><span style="color:#dcdcb0">uuid</span><span class="b" style="color:rgba(23,159,255,.85)">(</span><span class="b" style="color:rgba(23,159,255,.85)">)</span><span style="color:#d8d8d8">.</span><span style="color:#dcdcb0">openapi</span><span class="b" style="color:rgba(23,159,255,.85)">(</span><span class="b" style="color:#ffd700">{</span> <span style="color:#a3dcfb">description</span><span style="color:#d8d8d8">:</span> <span style="color:#d09982">&#x27;Unique identifier of the post&#x27;</span> <span class="b" style="color:#ffd700">}</span><span class="b" style="color:rgba(23,159,255,.85)">)</span><span style="color:#d8d8d8">,</span></div><div class="l"><i class="g" style="left:-0.50px"></i><i class="g" style="left:11.22px"></i>    <span style="color:#a3dcfb">post</span><span style="color:#d8d8d8">:</span> <span style="color:#a3dcfb">z</span><span style="color:#d8d8d8">.</span><span style="color:#dcdcb0">string</span><span class="b" style="color:rgba(23,159,255,.85)">(</span><span class="b" style="color:rgba(23,159,255,.85)">)</span><span style="color:#d8d8d8">.</span><span style="color:#dcdcb0">min</span><span class="b" style="color:rgba(23,159,255,.85)">(</span><span style="color:#b9d0ae">1</span><span class="b" style="color:rgba(23,159,255,.85)">)</span><span style="color:#d8d8d8">.</span><span style="color:#dcdcb0">max</span><span class="b" style="color:rgba(23,159,255,.85)">(</span><span style="color:#b9d0ae">140</span><span class="b" style="color:rgba(23,159,255,.85)">)</span><span style="color:#d8d8d8">.</span><span style="color:#dcdcb0">openapi</span><span class="b" style="color:rgba(23,159,255,.85)">(</span><span class="b" style="color:#ffd700">{</span> <span style="color:#a3dcfb">description</span><span style="color:#d8d8d8">:</span> <span style="color:#d09982">&#x27;Content of the post&#x27;</span> <span class="b" style="color:#ffd700">}</span><span class="b" style="color:rgba(23,159,255,.85)">)</span><span style="color:#d8d8d8">,</span></div><div class="l"><i class="g" style="left:-0.50px"></i><i class="g" style="left:11.22px"></i>    <span style="color:#a3dcfb">createdAt</span><span style="color:#d8d8d8">:</span> <span style="color:#a3dcfb">z</span><span style="color:#d8d8d8">.</span><span style="color:#a3dcfb">iso</span><span style="color:#d8d8d8">.</span><span style="color:#dcdcb0">datetime</span><span class="b" style="color:rgba(23,159,255,.85)">(</span><span class="b" style="color:rgba(23,159,255,.85)">)</span><span style="color:#d8d8d8">.</span><span style="color:#dcdcb0">openapi</span><span class="b" style="color:rgba(23,159,255,.85)">(</span><span class="b" style="color:#ffd700">{</span> <span style="color:#a3dcfb">description</span><span style="color:#d8d8d8">:</span> <span style="color:#d09982">&#x27;Timestamp when the post was created&#x27;</span> <span class="b" style="color:#ffd700">}</span><span class="b" style="color:rgba(23,159,255,.85)">)</span><span style="color:#d8d8d8">,</span></div><div class="l"><i class="g" style="left:-0.50px"></i><i class="g" style="left:11.22px"></i>    <span style="color:#a3dcfb">updatedAt</span><span style="color:#d8d8d8">:</span> <span style="color:#a3dcfb">z</span><span style="color:#d8d8d8">.</span><span style="color:#a3dcfb">iso</span></div><div class="l"><i class="g" style="left:-0.50px"></i><i class="g" style="left:11.22px"></i><i class="g" style="left:22.95px"></i>      <span style="color:#d8d8d8">.</span><span style="color:#dcdcb0">datetime</span><span class="b" style="color:rgba(23,159,255,.85)">(</span><span class="b" style="color:rgba(23,159,255,.85)">)</span></div><div class="l"><i class="g" style="left:-0.50px"></i><i class="g" style="left:11.22px"></i><i class="g" style="left:22.95px"></i>      <span style="color:#d8d8d8">.</span><span style="color:#dcdcb0">openapi</span><span class="b" style="color:rgba(23,159,255,.85)">(</span><span class="b" style="color:#ffd700">{</span> <span style="color:#a3dcfb">description</span><span style="color:#d8d8d8">:</span> <span style="color:#d09982">&#x27;Timestamp when the post was last updated&#x27;</span> <span class="b" style="color:#ffd700">}</span><span class="b" style="color:rgba(23,159,255,.85)">)</span><span style="color:#d8d8d8">,</span></div><div class="l"><i class="g" style="left:-0.50px"></i>  <span class="b" style="color:#da70d6">}</span><span class="b" style="color:#ffd700">)</span></div><div class="l"><i class="g" style="left:-0.50px"></i>  <span style="color:#d8d8d8">.</span><span style="color:#dcdcb0">openapi</span><span class="b" style="color:#ffd700">(</span><span style="color:#d09982">&#x27;Post&#x27;</span><span class="b" style="color:#ffd700">)</span></div><div class="l"><i class="g" style="left:-0.50px"></i>&#8203;</div><div class="l"><span style="color:#c88fc3">export</span> <span style="color:#64a3d7">const</span> <span style="color:#5ec4fc">getRoute</span> <span style="color:#d8d8d8">=</span> <span style="color:#dcdcb0">createRoute</span><span class="b" style="color:#ffd700">(</span><span class="b" style="color:#da70d6">{</span></div><div class="l"><i class="g" style="left:-0.50px"></i>  <span style="color:#a3dcfb">tags</span><span style="color:#d8d8d8">:</span> <span class="b" style="color:rgba(23,159,255,.85)">[</span><span style="color:#d09982">&#x27;Hono&#x27;</span><span class="b" style="color:rgba(23,159,255,.85)">]</span><span style="color:#d8d8d8">,</span></div><div class="l"><i class="g" style="left:-0.50px"></i>  <span style="color:#a3dcfb">method</span><span style="color:#d8d8d8">:</span> <span style="color:#d09982">&#x27;get&#x27;</span><span style="color:#d8d8d8">,</span></div><div class="l"><i class="g" style="left:-0.50px"></i>  <span style="color:#a3dcfb">path</span><span style="color:#d8d8d8">:</span> <span style="color:#d09982">&#x27;/&#x27;</span><span style="color:#d8d8d8">,</span></div><div class="l"><i class="g" style="left:-0.50px"></i>  <span style="color:#a3dcfb">summary</span><span style="color:#d8d8d8">:</span> <span style="color:#d09982">&#x27;Welcome message&#x27;</span><span style="color:#d8d8d8">,</span></div><div class="l"><i class="g" style="left:-0.50px"></i>  <span style="color:#a3dcfb">description</span><span style="color:#d8d8d8">:</span> <span style="color:#d09982">&#x27;Retrieve a simple welcome message from the Hono API.&#x27;</span><span style="color:#d8d8d8">,</span></div><div class="l"><i class="g" style="left:-0.50px"></i>  <span style="color:#a3dcfb">responses</span><span style="color:#d8d8d8">:</span> <span class="b" style="color:rgba(23,159,255,.85)">{</span></div><div class="l"><i class="g" style="left:-0.50px"></i><i class="g" style="left:11.22px"></i>    <span style="color:#b9d0ae">200</span><span style="color:#d8d8d8">:</span> <span class="b" style="color:#ffd700">{</span></div><div class="l"><i class="g" style="left:-0.50px"></i><i class="g" style="left:11.22px"></i><i class="g" style="left:22.95px"></i>      <span style="color:#a3dcfb">description</span><span style="color:#d8d8d8">:</span> <span style="color:#d09982">&#x27;Successful response with a welcome message.&#x27;</span><span style="color:#d8d8d8">,</span></div><div class="l"><i class="g" style="left:-0.50px"></i><i class="g" style="left:11.22px"></i><i class="g" style="left:22.95px"></i>      <span style="color:#a3dcfb">content</span><span style="color:#d8d8d8">:</span> <span class="b" style="color:#da70d6">{</span></div><div class="l"><i class="g" style="left:-0.50px"></i><i class="g" style="left:11.22px"></i><i class="g" style="left:22.95px"></i><i class="g" style="left:34.67px"></i>        <span style="color:#d09982">&#x27;application/json&#x27;</span><span style="color:#d8d8d8">:</span> <span class="b" style="color:rgba(23,159,255,.85)">{</span></div><div class="l"><i class="g" style="left:-0.50px"></i><i class="g" style="left:11.22px"></i><i class="g" style="left:22.95px"></i><i class="g" style="left:34.67px"></i><i class="g a" style="left:46.40px"></i>          <span style="color:#a3dcfb">schema</span><span style="color:#d8d8d8">:</span> <span style="color:#a3dcfb">z</span><span style="color:#d8d8d8">.</span><span style="color:#dcdcb0">object</span><span class="b" style="color:#ffd700">(</span><span class="b" style="color:#da70d6">{</span> <span style="color:#a3dcfb">message</span><span style="color:#d8d8d8">:</span> <span style="color:#a3dcfb">z</span><span style="color:#d8d8d8">.</span><span style="color:#dcdcb0">string</span><span class="b" style="color:rgba(23,159,255,.85)">(</span><span class="b" style="color:rgba(23,159,255,.85)">)</span><span style="color:#d8d8d8">.</span><span style="color:#dcdcb0">openapi</span><span class="b" style="color:rgba(23,159,255,.85)">(</span><span class="b" style="color:#ffd700">{</span> <span style="color:#a3dcfb">example</span><span style="color:#d8d8d8">:</span> <span style="color:#d09982">&#x27;Hono<svg width="11.7" height="12" viewBox="0 0 23.4 24" style="vertical-align:-2.5px;margin-right:0.44px"><path d="M11 1.5C13 5 18.5 8 19.5 14.5C20 19.5 16.5 23 11 23C5.5 23 2.5 19.5 2.5 15C2.5 11.5 4.5 9.5 5.5 7C6.5 9 7 10.5 8.2 11.2C8.5 7.5 9.5 4.5 11 1.5Z" fill="#f0641e"/><path d="M11 10.5C12.5 13 15.5 14.5 15.5 18C15.5 21 13.5 22.8 11 22.8C8.5 22.8 6.5 21 6.5 18.5C6.5 16.5 8 15.5 8.8 14C9.3 15 10 15.6 10.6 15.8C10.4 14 10.5 12 11 10.5Z" fill="#ffb02e"/><path d="M11 16.5C12 17.8 13 18.8 13 20.3C13 21.6 12.1 22.6 11 22.6C9.9 22.6 9 21.6 9 20.5C9 19.3 10.2 18.3 11 16.5Z" fill="#fff1b8"/></svg>&#x27;</span> <span class="b" style="color:#ffd700">}</span><span class="b" style="color:rgba(23,159,255,.85)">)</span> <span class="b" style="color:#da70d6">}</span><span class="b" style="color:#ffd700">)</span><span style="color:#d8d8d8">,</span></div><div class="l"><i class="g" style="left:-0.50px"></i><i class="g" style="left:11.22px"></i><i class="g" style="left:22.95px"></i><i class="g" style="left:34.67px"></i>        <span class="b" style="color:rgba(23,159,255,.85)">}</span><span style="color:#d8d8d8">,</span></div><div class="l"><i class="g" style="left:-0.50px"></i><i class="g" style="left:11.22px"></i><i class="g" style="left:22.95px"></i>      <span class="b" style="color:#da70d6">}</span><span style="color:#d8d8d8">,</span></div><div class="l"><i class="g" style="left:-0.50px"></i><i class="g" style="left:11.22px"></i>    <span class="b" style="color:#ffd700">}</span><span style="color:#d8d8d8">,</span></div><div class="l"><i class="g" style="left:-0.50px"></i>  <span class="b" style="color:rgba(23,159,255,.85)">}</span><span style="color:#d8d8d8">,</span></div><div class="l"><span class="b" style="color:#da70d6">}</span><span class="b" style="color:#ffd700">)</span></div><div class="l">&#8203;</div><div class="l"><span style="color:#c88fc3">export</span> <span style="color:#64a3d7">const</span> <span style="color:#5ec4fc">postPostsRoute</span> <span style="color:#d8d8d8">=</span> <span style="color:#dcdcb0">createRoute</span><span class="b" style="color:#ffd700">(</span><span class="b" style="color:#da70d6">{</span></div><div class="l"><i class="g" style="left:-0.50px"></i>  <span style="color:#a3dcfb">tags</span><span style="color:#d8d8d8">:</span> <span class="b" style="color:rgba(23,159,255,.85)">[</span><span style="color:#d09982">&#x27;Post&#x27;</span><span class="b" style="color:rgba(23,159,255,.85)">]</span><span style="color:#d8d8d8">,</span></div><div class="l"><i class="g" style="left:-0.50px"></i>  <span style="color:#a3dcfb">method</span><span style="color:#d8d8d8">:</span> <span style="color:#d09982">&#x27;post&#x27;</span><span style="color:#d8d8d8">,</span></div><div class="l"><i class="g" style="left:-0.50px"></i>  <span style="color:#a3dcfb">path</span><span style="color:#d8d8d8">:</span> <span style="color:#d09982">&#x27;/posts&#x27;</span><span style="color:#d8d8d8">,</span></div><div class="l"><i class="g" style="left:-0.50px"></i>  <span style="color:#a3dcfb">summary</span><span style="color:#d8d8d8">:</span> <span style="color:#d09982">&#x27;Create a new post&#x27;</span><span style="color:#d8d8d8">,</span></div><div class="l"><i class="g" style="left:-0.50px"></i>  <span style="color:#a3dcfb">description</span><span style="color:#d8d8d8">:</span> <span style="color:#d09982">&#x27;Submit a new post with a maximum length of 140 characters.&#x27;</span><span style="color:#d8d8d8">,</span></div><div class="l"><i class="g" style="left:-0.50px"></i>  <span style="color:#a3dcfb">request</span><span style="color:#d8d8d8">:</span> <span class="b" style="color:rgba(23,159,255,.85)">{</span></div><div class="l"><i class="g" style="left:-0.50px"></i><i class="g" style="left:11.22px"></i>    <span style="color:#a3dcfb">body</span><span style="color:#d8d8d8">:</span> <span class="b" style="color:#ffd700">{</span></div><div class="l"><i class="g" style="left:-0.50px"></i><i class="g" style="left:11.22px"></i><i class="g" style="left:22.95px"></i>      <span style="color:#a3dcfb">required</span><span style="color:#d8d8d8">:</span> <span style="color:#64a3d7">true</span><span style="color:#d8d8d8">,</span></div><div class="l"><i class="g" style="left:-0.50px"></i><i class="g" style="left:11.22px"></i><i class="g" style="left:22.95px"></i>      <span style="color:#a3dcfb">content</span><span style="color:#d8d8d8">:</span> <span class="b" style="color:#da70d6">{</span></div><div class="l"><i class="g" style="left:-0.50px"></i><i class="g" style="left:11.22px"></i><i class="g" style="left:22.95px"></i><i class="g" style="left:34.67px"></i>        <span style="color:#d09982">&#x27;application/json&#x27;</span><span style="color:#d8d8d8">:</span> <span class="b" style="color:rgba(23,159,255,.85)">{</span></div><div class="l"><i class="g" style="left:-0.50px"></i><i class="g" style="left:11.22px"></i><i class="g" style="left:22.95px"></i><i class="g" style="left:34.67px"></i><i class="g" style="left:46.40px"></i>          <span style="color:#a3dcfb">schema</span><span style="color:#d8d8d8">:</span> <span style="color:#a3dcfb">z</span><span style="color:#d8d8d8">.</span><span style="color:#dcdcb0">object</span><span class="b" style="color:#ffd700">(</span><span class="b" style="color:#da70d6">{</span></div><div class="l"><i class="g" style="left:-0.50px"></i><i class="g" style="left:11.22px"></i><i class="g" style="left:22.95px"></i><i class="g" style="left:34.67px"></i><i class="g" style="left:46.40px"></i><i class="g" style="left:58.12px"></i>            <span style="color:#a3dcfb">post</span><span style="color:#d8d8d8">:</span> <span style="color:#a3dcfb">z</span><span style="color:#d8d8d8">.</span><span style="color:#dcdcb0">string</span><span class="b" style="color:rgba(23,159,255,.85)">(</span><span class="b" style="color:rgba(23,159,255,.85)">)</span><span style="color:#d8d8d8">.</span><span style="color:#dcdcb0">min</span><span class="b" style="color:rgba(23,159,255,.85)">(</span><span style="color:#b9d0ae">1</span><span class="b" style="color:rgba(23,159,255,.85)">)</span><span style="color:#d8d8d8">.</span><span style="color:#dcdcb0">max</span><span class="b" style="color:rgba(23,159,255,.85)">(</span><span style="color:#b9d0ae">140</span><span class="b" style="color:rgba(23,159,255,.85)">)</span><span style="color:#d8d8d8">.</span><span style="color:#dcdcb0">openapi</span><span class="b" style="color:rgba(23,159,255,.85)">(</span><span class="b" style="color:#ffd700">{</span> <span style="color:#a3dcfb">description</span><span style="color:#d8d8d8">:</span> <span style="color:#d09982">&#x27;Content of the post&#x27;</span> <span class="b" style="color:#ffd700">}</span><span class="b" style="color:rgba(23,159,255,.85)">)</span><span style="color:#d8d8d8">,</span></div><div class="l"><i class="g" style="left:-0.50px"></i><i class="g" style="left:11.22px"></i><i class="g" style="left:22.95px"></i><i class="g" style="left:34.67px"></i><i class="g" style="left:46.40px"></i>          <span class="b" style="color:#da70d6">}</span><span class="b" style="color:#ffd700">)</span><span style="color:#d8d8d8">,</span></div><div class="l"><i class="g" style="left:-0.50px"></i><i class="g" style="left:11.22px"></i><i class="g" style="left:22.95px"></i><i class="g" style="left:34.67px"></i>        <span class="b" style="color:rgba(23,159,255,.85)">}</span><span style="color:#d8d8d8">,</span></div><div class="l"><i class="g" style="left:-0.50px"></i><i class="g" style="left:11.22px"></i><i class="g" style="left:22.95px"></i>      <span class="b" style="color:#da70d6">}</span><span style="color:#d8d8d8">,</span></div><div class="l"><i class="g" style="left:-0.50px"></i><i class="g" style="left:11.22px"></i>    <span class="b" style="color:#ffd700">}</span><span style="color:#d8d8d8">,</span></div><div class="l"><i class="g" style="left:-0.50px"></i>  <span class="b" style="color:rgba(23,159,255,.85)">}</span><span style="color:#d8d8d8">,</span></div></div>
  <div class="bl" style="left:1231.5px"></div>
  <svg class="mm" style="left:1233px" width="64" height="744"><rect x="6.00" y="0.20" width="3.79" height="0.90" fill="#d2abcf"/><rect x="10.59" y="0.20" width="0.51" height="0.90" fill="#f9dd46"/><rect class="k" x="11.90" y="0.20" width="7.07" height="0.90" fill="#b9e0f6"/><rect x="19.12" y="0.20" width="0.51" height="0.90" fill="#dedede"/><rect class="k" x="20.43" y="0.20" width="0.51" height="0.90" fill="#b9e0f6"/><rect x="21.74" y="0.20" width="0.51" height="0.90" fill="#f9dd46"/><rect x="23.06" y="0.20" width="2.47" height="0.90" fill="#d2abcf"/><rect x="26.34" y="0.20" width="12.31" height="0.90" fill="#d8b2a2"/><rect class="k" x="6.00" y="2.50" width="3.13" height="0.90" fill="#8cb9dd"/><rect x="9.94" y="2.50" width="7.07" height="0.90" fill="#88d0f7"/><rect x="17.81" y="2.50" width="0.51" height="0.90" fill="#dedede"/><rect class="k" x="19.12" y="2.50" width="0.51" height="0.90" fill="#b9e0f6"/><rect x="19.78" y="2.50" width="0.51" height="0.90" fill="#dedede"/><rect x="20.43" y="2.50" width="3.79" height="0.90" fill="#e0e0c2"/><rect x="24.37" y="2.50" width="0.51" height="0.90" fill="#f9dd46"/><rect x="25.02" y="2.50" width="0.51" height="0.90" fill="#df95dc"/><rect class="k" x="26.34" y="2.50" width="4.44" height="0.90" fill="#b9e0f6"/><rect x="30.93" y="2.50" width="0.51" height="0.90" fill="#dedede"/><rect class="k" x="32.24" y="2.50" width="0.51" height="0.90" fill="#b9e0f6"/><rect x="32.90" y="2.50" width="0.51" height="0.90" fill="#dedede"/><rect x="33.55" y="2.50" width="3.79" height="0.90" fill="#e0e0c2"/><rect x="37.49" y="2.50" width="0.51" height="0.90" fill="#57b6f9"/><rect x="38.14" y="2.50" width="0.51" height="0.90" fill="#57b6f9"/><rect x="39.46" y="2.50" width="0.51" height="0.90" fill="#df95dc"/><rect x="40.11" y="2.50" width="0.51" height="0.90" fill="#f9dd46"/><rect x="40.77" y="2.50" width="0.51" height="0.90" fill="#dedede"/><rect x="41.42" y="2.50" width="4.44" height="0.90" fill="#e0e0c2"/><rect x="46.02" y="2.50" width="0.51" height="0.90" fill="#f9dd46"/><rect x="46.67" y="2.50" width="4.44" height="0.90" fill="#d8b2a2"/><rect x="51.26" y="2.50" width="0.51" height="0.90" fill="#f9dd46"/><rect class="k" x="6.00" y="4.80" width="3.13" height="0.90" fill="#8cb9dd"/><rect x="9.94" y="4.80" width="6.41" height="0.90" fill="#88d0f7"/><rect x="17.15" y="4.80" width="0.51" height="0.90" fill="#dedede"/><rect class="k" x="18.46" y="4.80" width="0.51" height="0.90" fill="#b9e0f6"/><rect x="7.31" y="5.95" width="0.51" height="0.90" fill="#dedede"/><rect x="7.97" y="5.95" width="3.79" height="0.90" fill="#e0e0c2"/><rect x="11.90" y="5.95" width="0.51" height="0.90" fill="#f9dd46"/><rect x="12.56" y="5.95" width="0.51" height="0.90" fill="#df95dc"/><rect class="k" x="8.62" y="7.10" width="1.16" height="0.90" fill="#b9e0f6"/><rect x="9.94" y="7.10" width="0.51" height="0.90" fill="#dedede"/><rect class="k" x="11.25" y="7.10" width="0.51" height="0.90" fill="#b9e0f6"/><rect x="11.90" y="7.10" width="0.51" height="0.90" fill="#dedede"/><rect x="12.56" y="7.10" width="2.47" height="0.90" fill="#e0e0c2"/><rect x="15.18" y="7.10" width="0.51" height="0.90" fill="#57b6f9"/><rect x="15.84" y="7.10" width="0.51" height="0.90" fill="#57b6f9"/><rect x="16.50" y="7.10" width="0.51" height="0.90" fill="#dedede"/><rect x="17.15" y="7.10" width="4.44" height="0.90" fill="#e0e0c2"/><rect x="21.74" y="7.10" width="0.51" height="0.90" fill="#57b6f9"/><rect x="22.40" y="7.10" width="0.51" height="0.90" fill="#f9dd46"/><rect class="k" x="23.71" y="7.10" width="7.07" height="0.90" fill="#b9e0f6"/><rect x="30.93" y="7.10" width="0.51" height="0.90" fill="#dedede"/><rect x="32.24" y="7.10" width="4.44" height="0.90" fill="#d8b2a2"/><rect x="37.49" y="7.10" width="6.41" height="0.90" fill="#d8b2a2"/><rect x="44.70" y="7.10" width="1.16" height="0.90" fill="#d8b2a2"/><rect x="46.67" y="7.10" width="1.82" height="0.90" fill="#d8b2a2"/><rect x="49.30" y="7.10" width="3.13" height="0.90" fill="#d8b2a2"/><rect x="53.23" y="7.10" width="0.51" height="0.90" fill="#f9dd46"/><rect x="53.89" y="7.10" width="0.51" height="0.90" fill="#57b6f9"/><rect x="54.54" y="7.10" width="0.51" height="0.90" fill="#dedede"/><rect class="k" x="8.62" y="8.25" width="2.47" height="0.90" fill="#b9e0f6"/><rect x="11.25" y="8.25" width="0.51" height="0.90" fill="#dedede"/><rect class="k" x="12.56" y="8.25" width="0.51" height="0.90" fill="#b9e0f6"/><rect x="13.22" y="8.25" width="0.51" height="0.90" fill="#dedede"/><rect x="13.87" y="8.25" width="3.79" height="0.90" fill="#e0e0c2"/><rect x="17.81" y="8.25" width="0.51" height="0.90" fill="#57b6f9"/><rect x="18.46" y="8.25" width="0.51" height="0.90" fill="#57b6f9"/><rect x="19.12" y="8.25" width="0.51" height="0.90" fill="#dedede"/><rect x="19.78" y="8.25" width="1.82" height="0.90" fill="#e0e0c2"/><rect x="21.74" y="8.25" width="0.51" height="0.90" fill="#57b6f9"/><rect x="22.40" y="8.25" width="0.51" height="0.90" fill="#c8d8c0"/><rect x="23.06" y="8.25" width="0.51" height="0.90" fill="#57b6f9"/><rect x="23.71" y="8.25" width="0.51" height="0.90" fill="#dedede"/><rect x="24.37" y="8.25" width="1.82" height="0.90" fill="#e0e0c2"/><rect x="26.34" y="8.25" width="0.51" height="0.90" fill="#57b6f9"/><rect x="26.99" y="8.25" width="1.82" height="0.90" fill="#c8d8c0"/><rect x="28.96" y="8.25" width="0.51" height="0.90" fill="#57b6f9"/><rect x="29.62" y="8.25" width="0.51" height="0.90" fill="#dedede"/><rect x="30.27" y="8.25" width="4.44" height="0.90" fill="#e0e0c2"/><rect x="34.86" y="8.25" width="0.51" height="0.90" fill="#57b6f9"/><rect x="35.52" y="8.25" width="0.51" height="0.90" fill="#f9dd46"/><rect class="k" x="36.83" y="8.25" width="7.07" height="0.90" fill="#b9e0f6"/><rect x="44.05" y="8.25" width="0.51" height="0.90" fill="#dedede"/><rect x="45.36" y="8.25" width="5.10" height="0.90" fill="#d8b2a2"/><rect x="51.26" y="8.25" width="1.16" height="0.90" fill="#d8b2a2"/><rect x="53.23" y="8.25" width="1.82" height="0.90" fill="#d8b2a2"/><rect x="55.86" y="8.25" width="3.13" height="0.90" fill="#d8b2a2"/><rect x="59.79" y="8.25" width="0.51" height="0.90" fill="#f9dd46"/><rect x="60.45" y="8.25" width="0.51" height="0.90" fill="#57b6f9"/><rect x="61.10" y="8.25" width="0.51" height="0.90" fill="#dedede"/><rect class="k" x="8.62" y="9.40" width="5.75" height="0.90" fill="#b9e0f6"/><rect x="14.53" y="9.40" width="0.51" height="0.90" fill="#dedede"/><rect class="k" x="15.84" y="9.40" width="0.51" height="0.90" fill="#b9e0f6"/><rect x="16.50" y="9.40" width="0.51" height="0.90" fill="#dedede"/><rect class="k" x="17.15" y="9.40" width="1.82" height="0.90" fill="#b9e0f6"/><rect x="19.12" y="9.40" width="0.51" height="0.90" fill="#dedede"/><rect x="19.78" y="9.40" width="5.10" height="0.90" fill="#e0e0c2"/><rect x="25.02" y="9.40" width="0.51" height="0.90" fill="#57b6f9"/><rect x="25.68" y="9.40" width="0.51" height="0.90" fill="#57b6f9"/><rect x="26.34" y="9.40" width="0.51" height="0.90" fill="#dedede"/><rect x="26.99" y="9.40" width="4.44" height="0.90" fill="#e0e0c2"/><rect x="31.58" y="9.40" width="0.51" height="0.90" fill="#57b6f9"/><rect x="32.24" y="9.40" width="0.51" height="0.90" fill="#f9dd46"/><rect class="k" x="33.55" y="9.40" width="7.07" height="0.90" fill="#b9e0f6"/><rect x="40.77" y="9.40" width="0.51" height="0.90" fill="#dedede"/><rect x="42.08" y="9.40" width="6.41" height="0.90" fill="#d8b2a2"/><rect x="49.30" y="9.40" width="2.47" height="0.90" fill="#d8b2a2"/><rect x="52.58" y="9.40" width="1.82" height="0.90" fill="#d8b2a2"/><rect x="55.20" y="9.40" width="2.47" height="0.90" fill="#d8b2a2"/><rect x="58.48" y="9.40" width="1.82" height="0.90" fill="#d8b2a2"/><rect x="61.10" y="9.40" width="5.10" height="0.90" fill="#d8b2a2"/><rect x="67.01" y="9.40" width="0.51" height="0.90" fill="#f9dd46"/><rect x="67.66" y="9.40" width="0.51" height="0.90" fill="#57b6f9"/><rect x="68.32" y="9.40" width="0.51" height="0.90" fill="#dedede"/><rect class="k" x="8.62" y="10.55" width="5.75" height="0.90" fill="#b9e0f6"/><rect x="14.53" y="10.55" width="0.51" height="0.90" fill="#dedede"/><rect class="k" x="15.84" y="10.55" width="0.51" height="0.90" fill="#b9e0f6"/><rect x="16.50" y="10.55" width="0.51" height="0.90" fill="#dedede"/><rect class="k" x="17.15" y="10.55" width="1.82" height="0.90" fill="#b9e0f6"/><rect x="9.94" y="11.70" width="0.51" height="0.90" fill="#dedede"/><rect x="10.59" y="11.70" width="5.10" height="0.90" fill="#e0e0c2"/><rect x="15.84" y="11.70" width="0.51" height="0.90" fill="#57b6f9"/><rect x="16.50" y="11.70" width="0.51" height="0.90" fill="#57b6f9"/><rect x="9.94" y="12.85" width="0.51" height="0.90" fill="#dedede"/><rect x="10.59" y="12.85" width="4.44" height="0.90" fill="#e0e0c2"/><rect x="15.18" y="12.85" width="0.51" height="0.90" fill="#57b6f9"/><rect x="15.84" y="12.85" width="0.51" height="0.90" fill="#f9dd46"/><rect class="k" x="17.15" y="12.85" width="7.07" height="0.90" fill="#b9e0f6"/><rect x="24.37" y="12.85" width="0.51" height="0.90" fill="#dedede"/><rect x="25.68" y="12.85" width="6.41" height="0.90" fill="#d8b2a2"/><rect x="32.90" y="12.85" width="2.47" height="0.90" fill="#d8b2a2"/><rect x="36.18" y="12.85" width="1.82" height="0.90" fill="#d8b2a2"/><rect x="38.80" y="12.85" width="2.47" height="0.90" fill="#d8b2a2"/><rect x="42.08" y="12.85" width="1.82" height="0.90" fill="#d8b2a2"/><rect x="44.70" y="12.85" width="2.47" height="0.90" fill="#d8b2a2"/><rect x="47.98" y="12.85" width="5.10" height="0.90" fill="#d8b2a2"/><rect x="53.89" y="12.85" width="0.51" height="0.90" fill="#f9dd46"/><rect x="54.54" y="12.85" width="0.51" height="0.90" fill="#57b6f9"/><rect x="55.20" y="12.85" width="0.51" height="0.90" fill="#dedede"/><rect x="7.31" y="14.00" width="0.51" height="0.90" fill="#df95dc"/><rect x="7.97" y="14.00" width="0.51" height="0.90" fill="#f9dd46"/><rect x="7.31" y="15.15" width="0.51" height="0.90" fill="#dedede"/><rect x="7.97" y="15.15" width="4.44" height="0.90" fill="#e0e0c2"/><rect x="12.56" y="15.15" width="0.51" height="0.90" fill="#f9dd46"/><rect x="13.22" y="15.15" width="3.79" height="0.90" fill="#d8b2a2"/><rect x="17.15" y="15.15" width="0.51" height="0.90" fill="#f9dd46"/><rect x="6.00" y="17.45" width="3.79" height="0.90" fill="#d2abcf"/><rect class="k" x="10.59" y="17.45" width="3.13" height="0.90" fill="#8cb9dd"/><rect x="14.53" y="17.45" width="5.10" height="0.90" fill="#88d0f7"/><rect x="20.43" y="17.45" width="0.51" height="0.90" fill="#dedede"/><rect x="21.74" y="17.45" width="7.07" height="0.90" fill="#e0e0c2"/><rect x="28.96" y="17.45" width="0.51" height="0.90" fill="#f9dd46"/><rect x="29.62" y="17.45" width="0.51" height="0.90" fill="#df95dc"/><rect class="k" x="7.31" y="18.60" width="2.47" height="0.90" fill="#b9e0f6"/><rect x="9.94" y="18.60" width="0.51" height="0.90" fill="#dedede"/><rect x="11.25" y="18.60" width="0.51" height="0.90" fill="#57b6f9"/><rect x="11.90" y="18.60" width="3.79" height="0.90" fill="#d8b2a2"/><rect x="15.84" y="18.60" width="0.51" height="0.90" fill="#57b6f9"/><rect x="16.50" y="18.60" width="0.51" height="0.90" fill="#dedede"/><rect class="k" x="7.31" y="19.75" width="3.79" height="0.90" fill="#b9e0f6"/><rect x="11.25" y="19.75" width="0.51" height="0.90" fill="#dedede"/><rect x="12.56" y="19.75" width="3.13" height="0.90" fill="#d8b2a2"/><rect x="15.84" y="19.75" width="0.51" height="0.90" fill="#dedede"/><rect class="k" x="7.31" y="20.90" width="2.47" height="0.90" fill="#b9e0f6"/><rect x="9.94" y="20.90" width="0.51" height="0.90" fill="#dedede"/><rect x="11.25" y="20.90" width="1.82" height="0.90" fill="#d8b2a2"/><rect x="13.22" y="20.90" width="0.51" height="0.90" fill="#dedede"/><rect class="k" x="7.31" y="22.05" width="4.44" height="0.90" fill="#b9e0f6"/><rect x="11.90" y="22.05" width="0.51" height="0.90" fill="#dedede"/><rect x="13.22" y="22.05" width="5.10" height="0.90" fill="#d8b2a2"/><rect x="19.12" y="22.05" width="5.10" height="0.90" fill="#d8b2a2"/><rect x="24.37" y="22.05" width="0.51" height="0.90" fill="#dedede"/><rect class="k" x="7.31" y="23.20" width="7.07" height="0.90" fill="#b9e0f6"/><rect x="14.53" y="23.20" width="0.51" height="0.90" fill="#dedede"/><rect x="15.84" y="23.20" width="5.75" height="0.90" fill="#d8b2a2"/><rect x="22.40" y="23.20" width="0.51" height="0.90" fill="#d8b2a2"/><rect x="23.71" y="23.20" width="3.79" height="0.90" fill="#d8b2a2"/><rect x="28.30" y="23.20" width="4.44" height="0.90" fill="#d8b2a2"/><rect x="33.55" y="23.20" width="4.44" height="0.90" fill="#d8b2a2"/><rect x="38.80" y="23.20" width="2.47" height="0.90" fill="#d8b2a2"/><rect x="42.08" y="23.20" width="1.82" height="0.90" fill="#d8b2a2"/><rect x="44.70" y="23.20" width="2.47" height="0.90" fill="#d8b2a2"/><rect x="47.98" y="23.20" width="3.13" height="0.90" fill="#d8b2a2"/><rect x="51.26" y="23.20" width="0.51" height="0.90" fill="#dedede"/><rect class="k" x="7.31" y="24.35" width="5.75" height="0.90" fill="#b9e0f6"/><rect x="13.22" y="24.35" width="0.51" height="0.90" fill="#dedede"/><rect x="14.53" y="24.35" width="0.51" height="0.90" fill="#57b6f9"/><rect x="8.62" y="25.50" width="1.82" height="0.90" fill="#c8d8c0"/><rect x="10.59" y="25.50" width="0.51" height="0.90" fill="#dedede"/><rect x="11.90" y="25.50" width="0.51" height="0.90" fill="#f9dd46"/><rect class="k" x="9.94" y="26.65" width="7.07" height="0.90" fill="#b9e0f6"/><rect x="17.15" y="26.65" width="0.51" height="0.90" fill="#dedede"/><rect x="18.46" y="26.65" width="7.07" height="0.90" fill="#d8b2a2"/><rect x="26.34" y="26.65" width="5.10" height="0.90" fill="#d8b2a2"/><rect x="32.24" y="26.65" width="2.47" height="0.90" fill="#d8b2a2"/><rect x="35.52" y="26.65" width="0.51" height="0.90" fill="#d8b2a2"/><rect x="36.83" y="26.65" width="4.44" height="0.90" fill="#d8b2a2"/><rect x="42.08" y="26.65" width="5.75" height="0.90" fill="#d8b2a2"/><rect x="47.98" y="26.65" width="0.51" height="0.90" fill="#dedede"/><rect class="k" x="9.94" y="27.80" width="4.44" height="0.90" fill="#b9e0f6"/><rect x="14.53" y="27.80" width="0.51" height="0.90" fill="#dedede"/><rect x="15.84" y="27.80" width="0.51" height="0.90" fill="#df95dc"/><rect x="11.25" y="28.95" width="11.66" height="0.90" fill="#d8b2a2"/><rect x="23.06" y="28.95" width="0.51" height="0.90" fill="#dedede"/><rect x="24.37" y="28.95" width="0.51" height="0.90" fill="#57b6f9"/><rect class="k" x="12.56" y="30.10" width="3.79" height="0.90" fill="#b9e0f6"/><rect x="16.50" y="30.10" width="0.51" height="0.90" fill="#dedede"/><rect class="k" x="17.81" y="30.10" width="0.51" height="0.90" fill="#b9e0f6"/><rect x="18.46" y="30.10" width="0.51" height="0.90" fill="#dedede"/><rect x="19.12" y="30.10" width="3.79" height="0.90" fill="#e0e0c2"/><rect x="23.06" y="30.10" width="0.51" height="0.90" fill="#f9dd46"/><rect x="23.71" y="30.10" width="0.51" height="0.90" fill="#df95dc"/><rect class="k" x="25.02" y="30.10" width="4.44" height="0.90" fill="#b9e0f6"/><rect x="29.62" y="30.10" width="0.51" height="0.90" fill="#dedede"/><rect class="k" x="30.93" y="30.10" width="0.51" height="0.90" fill="#b9e0f6"/><rect x="31.58" y="30.10" width="0.51" height="0.90" fill="#dedede"/><rect x="32.24" y="30.10" width="3.79" height="0.90" fill="#e0e0c2"/><rect x="36.18" y="30.10" width="0.51" height="0.90" fill="#57b6f9"/><rect x="36.83" y="30.10" width="0.51" height="0.90" fill="#57b6f9"/><rect x="37.49" y="30.10" width="0.51" height="0.90" fill="#dedede"/><rect x="38.14" y="30.10" width="4.44" height="0.90" fill="#e0e0c2"/><rect x="42.74" y="30.10" width="0.51" height="0.90" fill="#57b6f9"/><rect x="43.39" y="30.10" width="0.51" height="0.90" fill="#f9dd46"/><rect class="k" x="44.70" y="30.10" width="4.44" height="0.90" fill="#b9e0f6"/><rect x="49.30" y="30.10" width="0.51" height="0.90" fill="#dedede"/><rect x="50.61" y="30.10" width="5.10" height="0.90" fill="#d8b2a2"/><rect x="56.51" y="30.10" width="0.51" height="0.90" fill="#f9dd46"/><rect x="57.17" y="30.10" width="0.51" height="0.90" fill="#57b6f9"/><rect x="58.48" y="30.10" width="0.51" height="0.90" fill="#df95dc"/><rect x="59.14" y="30.10" width="0.51" height="0.90" fill="#f9dd46"/><rect x="59.79" y="30.10" width="0.51" height="0.90" fill="#dedede"/><rect x="11.25" y="31.25" width="0.51" height="0.90" fill="#57b6f9"/><rect x="11.90" y="31.25" width="0.51" height="0.90" fill="#dedede"/><rect x="9.94" y="32.40" width="0.51" height="0.90" fill="#df95dc"/><rect x="10.59" y="32.40" width="0.51" height="0.90" fill="#dedede"/><rect x="8.62" y="33.55" width="0.51" height="0.90" fill="#f9dd46"/><rect x="9.28" y="33.55" width="0.51" height="0.90" fill="#dedede"/><rect x="7.31" y="34.70" width="0.51" height="0.90" fill="#57b6f9"/><rect x="7.97" y="34.70" width="0.51" height="0.90" fill="#dedede"/><rect x="6.00" y="35.85" width="0.51" height="0.90" fill="#df95dc"/><rect x="6.66" y="35.85" width="0.51" height="0.90" fill="#f9dd46"/><rect x="6.00" y="38.15" width="3.79" height="0.90" fill="#d2abcf"/><rect class="k" x="10.59" y="38.15" width="3.13" height="0.90" fill="#8cb9dd"/><rect x="14.53" y="38.15" width="9.03" height="0.90" fill="#88d0f7"/><rect x="24.37" y="38.15" width="0.51" height="0.90" fill="#dedede"/><rect x="25.68" y="38.15" width="7.07" height="0.90" fill="#e0e0c2"/><rect x="32.90" y="38.15" width="0.51" height="0.90" fill="#f9dd46"/><rect x="33.55" y="38.15" width="0.51" height="0.90" fill="#df95dc"/><rect class="k" x="7.31" y="39.30" width="2.47" height="0.90" fill="#b9e0f6"/><rect x="9.94" y="39.30" width="0.51" height="0.90" fill="#dedede"/><rect x="11.25" y="39.30" width="0.51" height="0.90" fill="#57b6f9"/><rect x="11.90" y="39.30" width="3.79" height="0.90" fill="#d8b2a2"/><rect x="15.84" y="39.30" width="0.51" height="0.90" fill="#57b6f9"/><rect x="16.50" y="39.30" width="0.51" height="0.90" fill="#dedede"/><rect class="k" x="7.31" y="40.45" width="3.79" height="0.90" fill="#b9e0f6"/><rect x="11.25" y="40.45" width="0.51" height="0.90" fill="#dedede"/><rect x="12.56" y="40.45" width="3.79" height="0.90" fill="#d8b2a2"/><rect x="16.50" y="40.45" width="0.51" height="0.90" fill="#dedede"/><rect class="k" x="7.31" y="41.60" width="2.47" height="0.90" fill="#b9e0f6"/><rect x="9.94" y="41.60" width="0.51" height="0.90" fill="#dedede"/><rect x="11.25" y="41.60" width="5.10" height="0.90" fill="#d8b2a2"/><rect x="16.50" y="41.60" width="0.51" height="0.90" fill="#dedede"/><rect class="k" x="7.31" y="42.75" width="4.44" height="0.90" fill="#b9e0f6"/><rect x="11.90" y="42.75" width="0.51" height="0.90" fill="#dedede"/><rect x="13.22" y="42.75" width="4.44" height="0.90" fill="#d8b2a2"/><rect x="18.46" y="42.75" width="0.51" height="0.90" fill="#d8b2a2"/><rect x="19.78" y="42.75" width="1.82" height="0.90" fill="#d8b2a2"/><rect x="22.40" y="42.75" width="3.13" height="0.90" fill="#d8b2a2"/><rect x="25.68" y="42.75" width="0.51" height="0.90" fill="#dedede"/><rect class="k" x="7.31" y="43.90" width="7.07" height="0.90" fill="#b9e0f6"/><rect x="14.53" y="43.90" width="0.51" height="0.90" fill="#dedede"/><rect x="15.84" y="43.90" width="4.44" height="0.90" fill="#d8b2a2"/><rect x="21.09" y="43.90" width="0.51" height="0.90" fill="#d8b2a2"/><rect x="22.40" y="43.90" width="1.82" height="0.90" fill="#d8b2a2"/><rect x="25.02" y="43.90" width="2.47" height="0.90" fill="#d8b2a2"/><rect x="28.30" y="43.90" width="2.47" height="0.90" fill="#d8b2a2"/><rect x="31.58" y="43.90" width="0.51" height="0.90" fill="#d8b2a2"/><rect x="32.90" y="43.90" width="4.44" height="0.90" fill="#d8b2a2"/><rect x="38.14" y="43.90" width="3.79" height="0.90" fill="#d8b2a2"/><rect x="42.74" y="43.90" width="1.16" height="0.90" fill="#d8b2a2"/><rect x="44.70" y="43.90" width="1.82" height="0.90" fill="#d8b2a2"/><rect x="47.33" y="43.90" width="7.72" height="0.90" fill="#d8b2a2"/><rect x="55.20" y="43.90" width="0.51" height="0.90" fill="#dedede"/><rect class="k" x="7.31" y="45.05" width="4.44" height="0.90" fill="#b9e0f6"/><rect x="11.90" y="45.05" width="0.51" height="0.90" fill="#dedede"/><rect x="13.22" y="45.05" width="0.51" height="0.90" fill="#57b6f9"/><rect class="k" x="8.62" y="46.20" width="2.47" height="0.90" fill="#b9e0f6"/><rect x="11.25" y="46.20" width="0.51" height="0.90" fill="#dedede"/><rect x="12.56" y="46.20" width="0.51" height="0.90" fill="#f9dd46"/><rect class="k" x="9.94" y="47.35" width="5.10" height="0.90" fill="#b9e0f6"/><rect x="15.18" y="47.35" width="0.51" height="0.90" fill="#dedede"/><rect class="k" x="16.50" y="47.35" width="2.47" height="0.90" fill="#8cb9dd"/><rect x="19.12" y="47.35" width="0.51" height="0.90" fill="#dedede"/><rect class="k" x="9.94" y="48.50" width="4.44" height="0.90" fill="#b9e0f6"/><rect x="14.53" y="48.50" width="0.51" height="0.90" fill="#dedede"/><rect x="15.84" y="48.50" width="0.51" height="0.90" fill="#df95dc"/><rect x="11.25" y="49.65" width="11.66" height="0.90" fill="#d8b2a2"/><rect x="23.06" y="49.65" width="0.51" height="0.90" fill="#dedede"/><rect x="24.37" y="49.65" width="0.51" height="0.90" fill="#57b6f9"/><rect class="k" x="12.56" y="50.80" width="3.79" height="0.90" fill="#b9e0f6"/><rect x="16.50" y="50.80" width="0.51" height="0.90" fill="#dedede"/><rect class="k" x="17.81" y="50.80" width="0.51" height="0.90" fill="#b9e0f6"/><rect x="18.46" y="50.80" width="0.51" height="0.90" fill="#dedede"/><rect x="19.12" y="50.80" width="3.79" height="0.90" fill="#e0e0c2"/><rect x="23.06" y="50.80" width="0.51" height="0.90" fill="#f9dd46"/><rect x="23.71" y="50.80" width="0.51" height="0.90" fill="#df95dc"/><rect class="k" x="13.87" y="51.95" width="2.47" height="0.90" fill="#b9e0f6"/><rect x="16.50" y="51.95" width="0.51" height="0.90" fill="#dedede"/><rect class="k" x="17.81" y="51.95" width="0.51" height="0.90" fill="#b9e0f6"/><rect x="18.46" y="51.95" width="0.51" height="0.90" fill="#dedede"/><rect x="19.12" y="51.95" width="3.79" height="0.90" fill="#e0e0c2"/><rect x="23.06" y="51.95" width="0.51" height="0.90" fill="#57b6f9"/><rect x="23.71" y="51.95" width="0.51" height="0.90" fill="#57b6f9"/><rect x="24.37" y="51.95" width="0.51" height="0.90" fill="#dedede"/><rect x="25.02" y="51.95" width="1.82" height="0.90" fill="#e0e0c2"/><rect x="26.99" y="51.95" width="0.51" height="0.90" fill="#57b6f9"/><rect x="27.65" y="51.95" width="0.51" height="0.90" fill="#c8d8c0"/><rect x="28.30" y="51.95" width="0.51" height="0.90" fill="#57b6f9"/><rect x="28.96" y="51.95" width="0.51" height="0.90" fill="#dedede"/><rect x="29.62" y="51.95" width="1.82" height="0.90" fill="#e0e0c2"/><rect x="31.58" y="51.95" width="0.51" height="0.90" fill="#57b6f9"/><rect x="32.24" y="51.95" width="1.82" height="0.90" fill="#c8d8c0"/><rect x="34.21" y="51.95" width="0.51" height="0.90" fill="#57b6f9"/><rect x="34.86" y="51.95" width="0.51" height="0.90" fill="#dedede"/><rect x="35.52" y="51.95" width="4.44" height="0.90" fill="#e0e0c2"/><rect x="40.11" y="51.95" width="0.51" height="0.90" fill="#57b6f9"/><rect x="40.77" y="51.95" width="0.51" height="0.90" fill="#f9dd46"/><rect class="k" x="42.08" y="51.95" width="7.07" height="0.90" fill="#b9e0f6"/><rect x="49.30" y="51.95" width="0.51" height="0.90" fill="#dedede"/><rect x="50.61" y="51.95" width="5.10" height="0.90" fill="#d8b2a2"/><rect x="56.51" y="51.95" width="1.16" height="0.90" fill="#d8b2a2"/><rect x="58.48" y="51.95" width="1.82" height="0.90" fill="#d8b2a2"/><rect x="61.10" y="51.95" width="3.13" height="0.90" fill="#d8b2a2"/><rect x="65.04" y="51.95" width="0.51" height="0.90" fill="#f9dd46"/><rect x="65.70" y="51.95" width="0.51" height="0.90" fill="#57b6f9"/><rect x="66.35" y="51.95" width="0.51" height="0.90" fill="#dedede"/><rect x="12.56" y="53.10" width="0.51" height="0.90" fill="#df95dc"/><rect x="13.22" y="53.10" width="0.51" height="0.90" fill="#f9dd46"/><rect x="13.87" y="53.10" width="0.51" height="0.90" fill="#dedede"/><rect x="11.25" y="54.25" width="0.51" height="0.90" fill="#57b6f9"/><rect x="11.90" y="54.25" width="0.51" height="0.90" fill="#dedede"/><rect x="9.94" y="55.40" width="0.51" height="0.90" fill="#df95dc"/><rect x="10.59" y="55.40" width="0.51" height="0.90" fill="#dedede"/><rect x="8.62" y="56.55" width="0.51" height="0.90" fill="#f9dd46"/><rect x="9.28" y="56.55" width="0.51" height="0.90" fill="#dedede"/><rect x="7.31" y="57.70" width="0.51" height="0.90" fill="#57b6f9"/><rect x="7.97" y="57.70" width="0.51" height="0.90" fill="#dedede"/><rect class="k" x="7.31" y="58.85" width="5.75" height="0.90" fill="#b9e0f6"/><rect x="13.22" y="58.85" width="0.51" height="0.90" fill="#dedede"/><rect x="14.53" y="58.85" width="0.51" height="0.90" fill="#57b6f9"/><rect x="8.62" y="60.00" width="1.82" height="0.90" fill="#c8d8c0"/><rect x="10.59" y="60.00" width="0.51" height="0.90" fill="#dedede"/><rect x="11.90" y="60.00" width="0.51" height="0.90" fill="#f9dd46"/><rect class="k" x="9.94" y="61.15" width="7.07" height="0.90" fill="#b9e0f6"/><rect x="17.15" y="61.15" width="0.51" height="0.90" fill="#dedede"/><rect x="18.46" y="61.15" width="3.13" height="0.90" fill="#d8b2a2"/><rect x="22.40" y="61.15" width="4.44" height="0.90" fill="#d8b2a2"/><rect x="27.65" y="61.15" width="9.03" height="0.90" fill="#d8b2a2"/><rect x="36.83" y="61.15" width="0.51" height="0.90" fill="#dedede"/><rect x="8.62" y="62.30" width="0.51" height="0.90" fill="#f9dd46"/><rect x="9.28" y="62.30" width="0.51" height="0.90" fill="#dedede"/><rect x="8.62" y="63.45" width="1.82" height="0.90" fill="#c8d8c0"/><rect x="10.59" y="63.45" width="0.51" height="0.90" fill="#dedede"/><rect x="11.90" y="63.45" width="0.51" height="0.90" fill="#f9dd46"/><rect class="k" x="9.94" y="64.60" width="7.07" height="0.90" fill="#b9e0f6"/><rect x="17.15" y="64.60" width="0.51" height="0.90" fill="#dedede"/><rect x="18.46" y="64.60" width="5.10" height="0.90" fill="#d8b2a2"/><rect x="24.37" y="64.60" width="4.44" height="0.90" fill="#d8b2a2"/><rect x="29.62" y="64.60" width="3.79" height="0.90" fill="#d8b2a2"/><rect x="33.55" y="64.60" width="0.51" height="0.90" fill="#dedede"/><rect class="k" x="9.94" y="65.75" width="4.44" height="0.90" fill="#b9e0f6"/><rect x="14.53" y="65.75" width="0.51" height="0.90" fill="#dedede"/><rect x="15.84" y="65.75" width="0.51" height="0.90" fill="#df95dc"/><rect x="11.25" y="66.90" width="11.66" height="0.90" fill="#d8b2a2"/><rect x="23.06" y="66.90" width="0.51" height="0.90" fill="#dedede"/><rect x="24.37" y="66.90" width="0.51" height="0.90" fill="#57b6f9"/><rect class="k" x="12.56" y="68.05" width="3.79" height="0.90" fill="#b9e0f6"/><rect x="16.50" y="68.05" width="0.51" height="0.90" fill="#dedede"/><rect x="17.81" y="68.05" width="7.07" height="0.90" fill="#88d0f7"/><rect x="25.02" y="68.05" width="0.51" height="0.90" fill="#dedede"/><rect x="11.25" y="69.20" width="0.51" height="0.90" fill="#57b6f9"/><rect x="11.90" y="69.20" width="0.51" height="0.90" fill="#dedede"/><rect x="9.94" y="70.35" width="0.51" height="0.90" fill="#df95dc"/><rect x="10.59" y="70.35" width="0.51" height="0.90" fill="#dedede"/><rect x="8.62" y="71.50" width="0.51" height="0.90" fill="#f9dd46"/><rect x="9.28" y="71.50" width="0.51" height="0.90" fill="#dedede"/><rect x="8.62" y="72.65" width="1.82" height="0.90" fill="#c8d8c0"/><rect x="10.59" y="72.65" width="0.51" height="0.90" fill="#dedede"/><rect x="11.90" y="72.65" width="0.51" height="0.90" fill="#f9dd46"/><rect class="k" x="9.94" y="73.80" width="7.07" height="0.90" fill="#b9e0f6"/><rect x="17.15" y="73.80" width="0.51" height="0.90" fill="#dedede"/><rect x="18.46" y="73.80" width="5.75" height="0.90" fill="#d8b2a2"/><rect x="25.02" y="73.80" width="3.79" height="0.90" fill="#d8b2a2"/><rect x="29.62" y="73.80" width="4.44" height="0.90" fill="#d8b2a2"/><rect x="34.21" y="73.80" width="0.51" height="0.90" fill="#dedede"/><rect class="k" x="9.94" y="74.95" width="4.44" height="0.90" fill="#b9e0f6"/><rect x="14.53" y="74.95" width="0.51" height="0.90" fill="#dedede"/><rect x="15.84" y="74.95" width="0.51" height="0.90" fill="#df95dc"/><rect x="11.25" y="76.10" width="11.66" height="0.90" fill="#d8b2a2"/><rect x="23.06" y="76.10" width="0.51" height="0.90" fill="#dedede"/><rect x="24.37" y="76.10" width="0.51" height="0.90" fill="#57b6f9"/><rect class="k" x="12.56" y="77.25" width="3.79" height="0.90" fill="#b9e0f6"/><rect x="16.50" y="77.25" width="0.51" height="0.90" fill="#dedede"/><rect x="17.81" y="77.25" width="7.07" height="0.90" fill="#88d0f7"/><rect x="25.02" y="77.25" width="0.51" height="0.90" fill="#dedede"/><rect x="11.25" y="78.40" width="0.51" height="0.90" fill="#57b6f9"/><rect x="11.90" y="78.40" width="0.51" height="0.90" fill="#dedede"/><rect x="9.94" y="79.55" width="0.51" height="0.90" fill="#df95dc"/><rect x="10.59" y="79.55" width="0.51" height="0.90" fill="#dedede"/><rect x="8.62" y="80.70" width="0.51" height="0.90" fill="#f9dd46"/><rect x="9.28" y="80.70" width="0.51" height="0.90" fill="#dedede"/><rect x="7.31" y="81.85" width="0.51" height="0.90" fill="#57b6f9"/><rect x="7.97" y="81.85" width="0.51" height="0.90" fill="#dedede"/><rect x="6.00" y="83.00" width="0.51" height="0.90" fill="#df95dc"/><rect x="6.66" y="83.00" width="0.51" height="0.90" fill="#f9dd46"/><rect x="6.00" y="85.30" width="3.79" height="0.90" fill="#d2abcf"/><rect class="k" x="10.59" y="85.30" width="3.13" height="0.90" fill="#8cb9dd"/><rect x="14.53" y="85.30" width="8.38" height="0.90" fill="#88d0f7"/><rect x="23.71" y="85.30" width="0.51" height="0.90" fill="#dedede"/><rect x="25.02" y="85.30" width="7.07" height="0.90" fill="#e0e0c2"/><rect x="32.24" y="85.30" width="0.51" height="0.90" fill="#f9dd46"/><rect x="32.90" y="85.30" width="0.51" height="0.90" fill="#df95dc"/><rect class="k" x="7.31" y="86.45" width="2.47" height="0.90" fill="#b9e0f6"/><rect x="9.94" y="86.45" width="0.51" height="0.90" fill="#dedede"/><rect x="11.25" y="86.45" width="0.51" height="0.90" fill="#57b6f9"/><rect x="11.90" y="86.45" width="3.79" height="0.90" fill="#d8b2a2"/><rect x="15.84" y="86.45" width="0.51" height="0.90" fill="#57b6f9"/><rect x="16.50" y="86.45" width="0.51" height="0.90" fill="#dedede"/><rect class="k" x="7.31" y="87.60" width="3.79" height="0.90" fill="#b9e0f6"/><rect x="11.25" y="87.60" width="0.51" height="0.90" fill="#dedede"/><rect x="12.56" y="87.60" width="3.13" height="0.90" fill="#d8b2a2"/><rect x="15.84" y="87.60" width="0.51" height="0.90" fill="#dedede"/><rect class="k" x="7.31" y="88.75" width="2.47" height="0.90" fill="#b9e0f6"/><rect x="9.94" y="88.75" width="0.51" height="0.90" fill="#dedede"/><rect x="11.25" y="88.75" width="5.10" height="0.90" fill="#d8b2a2"/><rect x="16.50" y="88.75" width="0.51" height="0.90" fill="#dedede"/><rect class="k" x="7.31" y="89.90" width="4.44" height="0.90" fill="#b9e0f6"/><rect x="11.90" y="89.90" width="0.51" height="0.90" fill="#dedede"/><rect x="13.22" y="89.90" width="5.75" height="0.90" fill="#d8b2a2"/><rect x="19.78" y="89.90" width="0.51" height="0.90" fill="#d8b2a2"/><rect x="21.09" y="89.90" width="2.47" height="0.90" fill="#d8b2a2"/><rect x="24.37" y="89.90" width="1.16" height="0.90" fill="#d8b2a2"/><rect x="26.34" y="89.90" width="3.79" height="0.90" fill="#d8b2a2"/><rect x="30.27" y="89.90" width="0.51" height="0.90" fill="#dedede"/><rect class="k" x="7.31" y="91.05" width="7.07" height="0.90" fill="#b9e0f6"/><rect x="14.53" y="91.05" width="0.51" height="0.90" fill="#dedede"/><rect x="15.84" y="91.05" width="5.75" height="0.90" fill="#d8b2a2"/><rect x="22.40" y="91.05" width="0.51" height="0.90" fill="#d8b2a2"/><rect x="23.71" y="91.05" width="5.75" height="0.90" fill="#d8b2a2"/><rect x="30.27" y="91.05" width="2.47" height="0.90" fill="#d8b2a2"/><rect x="33.55" y="91.05" width="1.16" height="0.90" fill="#d8b2a2"/><rect x="35.52" y="91.05" width="3.79" height="0.90" fill="#d8b2a2"/><rect x="40.11" y="91.05" width="4.44" height="0.90" fill="#d8b2a2"/><rect x="45.36" y="91.05" width="1.82" height="0.90" fill="#d8b2a2"/><rect x="47.98" y="91.05" width="2.47" height="0.90" fill="#d8b2a2"/><rect x="51.26" y="91.05" width="3.79" height="0.90" fill="#d8b2a2"/><rect x="55.86" y="91.05" width="1.82" height="0.90" fill="#d8b2a2"/><rect x="58.48" y="91.05" width="3.13" height="0.90" fill="#d8b2a2"/><rect x="62.42" y="91.05" width="1.82" height="0.90" fill="#d8b2a2"/><rect x="65.04" y="91.05" width="3.79" height="0.90" fill="#d8b2a2"/><rect x="68.98" y="91.05" width="0.51" height="0.90" fill="#dedede"/><rect class="k" x="7.31" y="92.20" width="4.44" height="0.90" fill="#b9e0f6"/><rect x="11.90" y="92.20" width="0.51" height="0.90" fill="#dedede"/><rect x="13.22" y="92.20" width="0.51" height="0.90" fill="#57b6f9"/><rect class="k" x="8.62" y="93.35" width="3.13" height="0.90" fill="#b9e0f6"/><rect x="11.90" y="93.35" width="0.51" height="0.90" fill="#dedede"/><rect class="k" x="13.22" y="93.35" width="0.51" height="0.90" fill="#b9e0f6"/><rect x="13.87" y="93.35" width="0.51" height="0.90" fill="#dedede"/><rect x="14.53" y="93.35" width="3.79" height="0.90" fill="#e0e0c2"/><rect x="18.46" y="93.35" width="0.51" height="0.90" fill="#f9dd46"/><rect x="19.12" y="93.35" width="0.51" height="0.90" fill="#df95dc"/><rect class="k" x="9.94" y="94.50" width="2.47" height="0.90" fill="#b9e0f6"/><rect x="12.56" y="94.50" width="0.51" height="0.90" fill="#dedede"/><rect class="k" x="13.87" y="94.50" width="0.51" height="0.90" fill="#b9e0f6"/><rect x="14.53" y="94.50" width="0.51" height="0.90" fill="#dedede"/><rect x="15.18" y="94.50" width="3.79" height="0.90" fill="#e0e0c2"/><rect x="19.12" y="94.50" width="0.51" height="0.90" fill="#57b6f9"/><rect x="19.78" y="94.50" width="0.51" height="0.90" fill="#57b6f9"/><rect x="20.43" y="94.50" width="0.51" height="0.90" fill="#dedede"/><rect x="21.09" y="94.50" width="1.82" height="0.90" fill="#e0e0c2"/><rect x="23.06" y="94.50" width="0.51" height="0.90" fill="#57b6f9"/><rect x="23.71" y="94.50" width="0.51" height="0.90" fill="#c8d8c0"/><rect x="24.37" y="94.50" width="0.51" height="0.90" fill="#57b6f9"/><rect x="25.02" y="94.50" width="0.51" height="0.90" fill="#dedede"/><rect x="25.68" y="94.50" width="5.10" height="0.90" fill="#e0e0c2"/><rect x="30.93" y="94.50" width="0.51" height="0.90" fill="#57b6f9"/><rect x="31.58" y="94.50" width="0.51" height="0.90" fill="#57b6f9"/><rect x="32.24" y="94.50" width="0.51" height="0.90" fill="#dedede"/><rect x="32.90" y="94.50" width="4.44" height="0.90" fill="#e0e0c2"/><rect x="37.49" y="94.50" width="0.51" height="0.90" fill="#57b6f9"/><rect x="38.14" y="94.50" width="0.51" height="0.90" fill="#f9dd46"/><rect class="k" x="39.46" y="94.50" width="4.44" height="0.90" fill="#b9e0f6"/><rect x="44.05" y="94.50" width="0.51" height="0.90" fill="#dedede"/><rect x="45.36" y="94.50" width="1.82" height="0.90" fill="#d8b2a2"/><rect x="47.98" y="94.50" width="0.51" height="0.90" fill="#f9dd46"/><rect x="48.64" y="94.50" width="0.51" height="0.90" fill="#57b6f9"/><rect x="49.30" y="94.50" width="0.51" height="0.90" fill="#dedede"/><rect class="k" x="9.94" y="95.65" width="3.13" height="0.90" fill="#b9e0f6"/><rect x="13.22" y="95.65" width="0.51" height="0.90" fill="#dedede"/><rect class="k" x="14.53" y="95.65" width="0.51" height="0.90" fill="#b9e0f6"/><rect x="15.18" y="95.65" width="0.51" height="0.90" fill="#dedede"/><rect x="15.84" y="95.65" width="3.79" height="0.90" fill="#e0e0c2"/><rect x="19.78" y="95.65" width="0.51" height="0.90" fill="#57b6f9"/><rect x="20.43" y="95.65" width="0.51" height="0.90" fill="#57b6f9"/><rect x="21.09" y="95.65" width="0.51" height="0.90" fill="#dedede"/><rect x="21.74" y="95.65" width="1.82" height="0.90" fill="#e0e0c2"/><rect x="23.71" y="95.65" width="0.51" height="0.90" fill="#57b6f9"/><rect x="24.37" y="95.65" width="0.51" height="0.90" fill="#c8d8c0"/><rect x="25.02" y="95.65" width="0.51" height="0.90" fill="#57b6f9"/><rect x="25.68" y="95.65" width="0.51" height="0.90" fill="#dedede"/><rect x="26.34" y="95.65" width="5.10" height="0.90" fill="#e0e0c2"/><rect x="31.58" y="95.65" width="0.51" height="0.90" fill="#57b6f9"/><rect x="32.24" y="95.65" width="0.51" height="0.90" fill="#57b6f9"/><rect x="32.90" y="95.65" width="0.51" height="0.90" fill="#dedede"/><rect x="33.55" y="95.65" width="4.44" height="0.90" fill="#e0e0c2"/><rect x="38.14" y="95.65" width="0.51" height="0.90" fill="#57b6f9"/><rect x="38.80" y="95.65" width="0.51" height="0.90" fill="#f9dd46"/><rect class="k" x="40.11" y="95.65" width="4.44" height="0.90" fill="#b9e0f6"/><rect x="44.70" y="95.65" width="0.51" height="0.90" fill="#dedede"/><rect x="46.02" y="95.65" width="2.47" height="0.90" fill="#d8b2a2"/><rect x="49.30" y="95.65" width="0.51" height="0.90" fill="#f9dd46"/><rect x="49.95" y="95.65" width="0.51" height="0.90" fill="#57b6f9"/><rect x="50.61" y="95.65" width="0.51" height="0.90" fill="#dedede"/><rect x="8.62" y="96.80" width="0.51" height="0.90" fill="#df95dc"/><rect x="9.28" y="96.80" width="0.51" height="0.90" fill="#f9dd46"/><rect x="9.94" y="96.80" width="0.51" height="0.90" fill="#dedede"/><rect x="7.31" y="97.95" width="0.51" height="0.90" fill="#57b6f9"/><rect x="7.97" y="97.95" width="0.51" height="0.90" fill="#dedede"/><rect class="k" x="7.31" y="99.10" width="5.75" height="0.90" fill="#b9e0f6"/><rect x="13.22" y="99.10" width="0.51" height="0.90" fill="#dedede"/><rect x="14.53" y="99.10" width="0.51" height="0.90" fill="#57b6f9"/><rect x="8.62" y="100.25" width="1.82" height="0.90" fill="#c8d8c0"/><rect x="10.59" y="100.25" width="0.51" height="0.90" fill="#dedede"/><rect x="11.90" y="100.25" width="0.51" height="0.90" fill="#f9dd46"/><rect class="k" x="9.94" y="101.40" width="7.07" height="0.90" fill="#b9e0f6"/><rect x="17.15" y="101.40" width="0.51" height="0.90" fill="#dedede"/><rect x="18.46" y="101.40" width="7.07" height="0.90" fill="#d8b2a2"/><rect x="26.34" y="101.40" width="5.75" height="0.90" fill="#d8b2a2"/><rect x="32.90" y="101.40" width="1.16" height="0.90" fill="#d8b2a2"/><rect x="34.86" y="101.40" width="4.44" height="0.90" fill="#d8b2a2"/><rect x="39.46" y="101.40" width="0.51" height="0.90" fill="#dedede"/><rect class="k" x="9.94" y="102.55" width="4.44" height="0.90" fill="#b9e0f6"/><rect x="14.53" y="102.55" width="0.51" height="0.90" fill="#dedede"/><rect x="15.84" y="102.55" width="0.51" height="0.90" fill="#df95dc"/><rect x="11.25" y="103.70" width="11.66" height="0.90" fill="#d8b2a2"/><rect x="23.06" y="103.70" width="0.51" height="0.90" fill="#dedede"/><rect x="24.37" y="103.70" width="0.51" height="0.90" fill="#57b6f9"/><rect class="k" x="12.56" y="104.85" width="3.79" height="0.90" fill="#b9e0f6"/><rect x="16.50" y="104.85" width="0.51" height="0.90" fill="#dedede"/><rect class="k" x="17.81" y="104.85" width="0.51" height="0.90" fill="#b9e0f6"/><rect x="18.46" y="104.85" width="0.51" height="0.90" fill="#dedede"/><rect x="19.12" y="104.85" width="3.13" height="0.90" fill="#e0e0c2"/><rect x="22.40" y="104.85" width="0.51" height="0.90" fill="#f9dd46"/><rect x="23.06" y="104.85" width="6.41" height="0.90" fill="#88d0f7"/><rect x="29.62" y="104.85" width="0.51" height="0.90" fill="#f9dd46"/><rect x="30.27" y="104.85" width="0.51" height="0.90" fill="#dedede"/><rect x="11.25" y="106.00" width="0.51" height="0.90" fill="#57b6f9"/><rect x="11.90" y="106.00" width="0.51" height="0.90" fill="#dedede"/><rect x="9.94" y="107.15" width="0.51" height="0.90" fill="#df95dc"/><rect x="10.59" y="107.15" width="0.51" height="0.90" fill="#dedede"/><rect x="8.62" y="108.30" width="0.51" height="0.90" fill="#f9dd46"/><rect x="9.28" y="108.30" width="0.51" height="0.90" fill="#dedede"/><rect x="8.62" y="109.45" width="1.82" height="0.90" fill="#c8d8c0"/><rect x="10.59" y="109.45" width="0.51" height="0.90" fill="#dedede"/><rect x="11.90" y="109.45" width="0.51" height="0.90" fill="#f9dd46"/><rect class="k" x="9.94" y="110.60" width="7.07" height="0.90" fill="#b9e0f6"/><rect x="17.15" y="110.60" width="0.51" height="0.90" fill="#dedede"/><rect x="18.46" y="110.60" width="5.75" height="0.90" fill="#d8b2a2"/><rect x="25.02" y="110.60" width="3.79" height="0.90" fill="#d8b2a2"/><rect x="29.62" y="110.60" width="4.44" height="0.90" fill="#d8b2a2"/><rect x="34.21" y="110.60" width="0.51" height="0.90" fill="#dedede"/><rect class="k" x="9.94" y="111.75" width="4.44" height="0.90" fill="#b9e0f6"/><rect x="14.53" y="111.75" width="0.51" height="0.90" fill="#dedede"/><rect x="15.84" y="111.75" width="0.51" height="0.90" fill="#df95dc"/><rect x="11.25" y="112.90" width="11.66" height="0.90" fill="#d8b2a2"/><rect x="23.06" y="112.90" width="0.51" height="0.90" fill="#dedede"/><rect x="24.37" y="112.90" width="0.51" height="0.90" fill="#57b6f9"/><rect class="k" x="12.56" y="114.05" width="3.79" height="0.90" fill="#b9e0f6"/><rect x="16.50" y="114.05" width="0.51" height="0.90" fill="#dedede"/><rect x="17.81" y="114.05" width="7.07" height="0.90" fill="#88d0f7"/><rect x="25.02" y="114.05" width="0.51" height="0.90" fill="#dedede"/><rect x="11.25" y="115.20" width="0.51" height="0.90" fill="#57b6f9"/><rect x="11.90" y="115.20" width="0.51" height="0.90" fill="#dedede"/><rect x="9.94" y="116.35" width="0.51" height="0.90" fill="#df95dc"/><rect x="10.59" y="116.35" width="0.51" height="0.90" fill="#dedede"/><rect x="8.62" y="117.50" width="0.51" height="0.90" fill="#f9dd46"/><rect x="9.28" y="117.50" width="0.51" height="0.90" fill="#dedede"/><rect x="7.31" y="118.65" width="0.51" height="0.90" fill="#57b6f9"/><rect x="7.97" y="118.65" width="0.51" height="0.90" fill="#dedede"/><rect x="6.00" y="119.80" width="0.51" height="0.90" fill="#df95dc"/><rect x="6.66" y="119.80" width="0.51" height="0.90" fill="#f9dd46"/><rect x="6.00" y="122.10" width="3.79" height="0.90" fill="#d2abcf"/><rect class="k" x="10.59" y="122.10" width="3.13" height="0.90" fill="#8cb9dd"/><rect x="14.53" y="122.10" width="7.72" height="0.90" fill="#88d0f7"/><rect x="23.06" y="122.10" width="0.51" height="0.90" fill="#dedede"/><rect x="24.37" y="122.10" width="7.07" height="0.90" fill="#e0e0c2"/><rect x="31.58" y="122.10" width="0.51" height="0.90" fill="#f9dd46"/><rect x="32.24" y="122.10" width="0.51" height="0.90" fill="#df95dc"/><rect class="k" x="7.31" y="123.25" width="2.47" height="0.90" fill="#b9e0f6"/><rect x="9.94" y="123.25" width="0.51" height="0.90" fill="#dedede"/><rect x="11.25" y="123.25" width="0.51" height="0.90" fill="#57b6f9"/><rect x="11.90" y="123.25" width="3.79" height="0.90" fill="#d8b2a2"/><rect x="15.84" y="123.25" width="0.51" height="0.90" fill="#57b6f9"/><rect x="16.50" y="123.25" width="0.51" height="0.90" fill="#dedede"/><rect class="k" x="7.31" y="124.40" width="3.79" height="0.90" fill="#b9e0f6"/><rect x="11.25" y="124.40" width="0.51" height="0.90" fill="#dedede"/><rect x="12.56" y="124.40" width="3.13" height="0.90" fill="#d8b2a2"/><rect x="15.84" y="124.40" width="0.51" height="0.90" fill="#dedede"/><rect class="k" x="7.31" y="125.55" width="2.47" height="0.90" fill="#b9e0f6"/><rect x="9.94" y="125.55" width="0.51" height="0.90" fill="#dedede"/><rect x="11.25" y="125.55" width="8.38" height="0.90" fill="#d8b2a2"/><rect x="19.78" y="125.55" width="0.51" height="0.90" fill="#dedede"/><rect class="k" x="7.31" y="126.70" width="4.44" height="0.90" fill="#b9e0f6"/><rect x="11.90" y="126.70" width="0.51" height="0.90" fill="#dedede"/><rect x="13.22" y="126.70" width="4.44" height="0.90" fill="#d8b2a2"/><rect x="18.46" y="126.70" width="1.16" height="0.90" fill="#d8b2a2"/><rect x="20.43" y="126.70" width="5.10" height="0.90" fill="#d8b2a2"/><rect x="26.34" y="126.70" width="3.13" height="0.90" fill="#d8b2a2"/><rect x="29.62" y="126.70" width="0.51" height="0.90" fill="#dedede"/><rect class="k" x="7.31" y="127.85" width="7.07" height="0.90" fill="#b9e0f6"/><rect x="14.53" y="127.85" width="0.51" height="0.90" fill="#dedede"/><rect x="15.84" y="127.85" width="4.44" height="0.90" fill="#d8b2a2"/><rect x="21.09" y="127.85" width="1.82" height="0.90" fill="#d8b2a2"/><rect x="23.71" y="127.85" width="4.44" height="0.90" fill="#d8b2a2"/><rect x="28.96" y="127.85" width="1.16" height="0.90" fill="#d8b2a2"/><rect x="30.93" y="127.85" width="1.16" height="0.90" fill="#d8b2a2"/><rect x="32.90" y="127.85" width="5.10" height="0.90" fill="#d8b2a2"/><rect x="38.80" y="127.85" width="2.47" height="0.90" fill="#d8b2a2"/><rect x="42.08" y="127.85" width="6.41" height="0.90" fill="#d8b2a2"/><rect x="49.30" y="127.85" width="1.16" height="0.90" fill="#d8b2a2"/><rect x="51.26" y="127.85" width="1.82" height="0.90" fill="#d8b2a2"/><rect x="53.89" y="127.85" width="3.79" height="0.90" fill="#d8b2a2"/><rect x="58.48" y="127.85" width="2.47" height="0.90" fill="#d8b2a2"/><rect x="61.10" y="127.85" width="0.51" height="0.90" fill="#dedede"/><rect class="k" x="7.31" y="129.00" width="4.44" height="0.90" fill="#b9e0f6"/><rect x="11.90" y="129.00" width="0.51" height="0.90" fill="#dedede"/><rect x="13.22" y="129.00" width="0.51" height="0.90" fill="#57b6f9"/><rect class="k" x="8.62" y="130.15" width="3.79" height="0.90" fill="#b9e0f6"/><rect x="12.56" y="130.15" width="0.51" height="0.90" fill="#dedede"/><rect class="k" x="13.87" y="130.15" width="0.51" height="0.90" fill="#b9e0f6"/><rect x="14.53" y="130.15" width="0.51" height="0.90" fill="#dedede"/><rect x="15.18" y="130.15" width="3.79" height="0.90" fill="#e0e0c2"/><rect x="19.12" y="130.15" width="0.51" height="0.90" fill="#f9dd46"/><rect x="19.78" y="130.15" width="0.51" height="0.90" fill="#df95dc"/><rect class="k" x="21.09" y="130.15" width="1.16" height="0.90" fill="#b9e0f6"/><rect x="22.40" y="130.15" width="0.51" height="0.90" fill="#dedede"/><rect class="k" x="23.71" y="130.15" width="0.51" height="0.90" fill="#b9e0f6"/><rect x="24.37" y="130.15" width="0.51" height="0.90" fill="#dedede"/><rect x="25.02" y="130.15" width="2.47" height="0.90" fill="#e0e0c2"/><rect x="27.65" y="130.15" width="0.51" height="0.90" fill="#57b6f9"/><rect x="28.30" y="130.15" width="0.51" height="0.90" fill="#57b6f9"/><rect x="29.62" y="130.15" width="0.51" height="0.90" fill="#df95dc"/><rect x="30.27" y="130.15" width="0.51" height="0.90" fill="#f9dd46"/><rect x="30.93" y="130.15" width="0.51" height="0.90" fill="#dedede"/><rect class="k" x="8.62" y="131.30" width="2.47" height="0.90" fill="#b9e0f6"/><rect x="11.25" y="131.30" width="0.51" height="0.90" fill="#dedede"/><rect x="12.56" y="131.30" width="0.51" height="0.90" fill="#f9dd46"/><rect class="k" x="9.94" y="132.45" width="5.10" height="0.90" fill="#b9e0f6"/><rect x="15.18" y="132.45" width="0.51" height="0.90" fill="#dedede"/><rect class="k" x="16.50" y="132.45" width="2.47" height="0.90" fill="#8cb9dd"/><rect x="19.12" y="132.45" width="0.51" height="0.90" fill="#dedede"/><rect class="k" x="9.94" y="133.60" width="4.44" height="0.90" fill="#b9e0f6"/><rect x="14.53" y="133.60" width="0.51" height="0.90" fill="#dedede"/><rect x="15.84" y="133.60" width="0.51" height="0.90" fill="#df95dc"/><rect x="11.25" y="134.75" width="11.66" height="0.90" fill="#d8b2a2"/><rect x="23.06" y="134.75" width="0.51" height="0.90" fill="#dedede"/><rect x="24.37" y="134.75" width="0.51" height="0.90" fill="#57b6f9"/><rect class="k" x="12.56" y="135.90" width="3.79" height="0.90" fill="#b9e0f6"/><rect x="16.50" y="135.90" width="0.51" height="0.90" fill="#dedede"/><rect class="k" x="17.81" y="135.90" width="0.51" height="0.90" fill="#b9e0f6"/><rect x="18.46" y="135.90" width="0.51" height="0.90" fill="#dedede"/><rect x="19.12" y="135.90" width="3.79" height="0.90" fill="#e0e0c2"/><rect x="23.06" y="135.90" width="0.51" height="0.90" fill="#f9dd46"/><rect x="23.71" y="135.90" width="0.51" height="0.90" fill="#df95dc"/><rect class="k" x="13.87" y="137.05" width="2.47" height="0.90" fill="#b9e0f6"/><rect x="16.50" y="137.05" width="0.51" height="0.90" fill="#dedede"/><rect class="k" x="17.81" y="137.05" width="0.51" height="0.90" fill="#b9e0f6"/><rect x="18.46" y="137.05" width="0.51" height="0.90" fill="#dedede"/><rect x="19.12" y="137.05" width="3.79" height="0.90" fill="#e0e0c2"/><rect x="23.06" y="137.05" width="0.51" height="0.90" fill="#57b6f9"/><rect x="23.71" y="137.05" width="0.51" height="0.90" fill="#57b6f9"/><rect x="24.37" y="137.05" width="0.51" height="0.90" fill="#dedede"/><rect x="25.02" y="137.05" width="1.82" height="0.90" fill="#e0e0c2"/><rect x="26.99" y="137.05" width="0.51" height="0.90" fill="#57b6f9"/><rect x="27.65" y="137.05" width="0.51" height="0.90" fill="#c8d8c0"/><rect x="28.30" y="137.05" width="0.51" height="0.90" fill="#57b6f9"/><rect x="28.96" y="137.05" width="0.51" height="0.90" fill="#dedede"/><rect x="29.62" y="137.05" width="1.82" height="0.90" fill="#e0e0c2"/><rect x="31.58" y="137.05" width="0.51" height="0.90" fill="#57b6f9"/><rect x="32.24" y="137.05" width="1.82" height="0.90" fill="#c8d8c0"/><rect x="34.21" y="137.05" width="0.51" height="0.90" fill="#57b6f9"/><rect x="34.86" y="137.05" width="0.51" height="0.90" fill="#dedede"/><rect x="12.56" y="138.20" width="0.51" height="0.90" fill="#df95dc"/><rect x="13.22" y="138.20" width="0.51" height="0.90" fill="#f9dd46"/><rect x="13.87" y="138.20" width="0.51" height="0.90" fill="#dedede"/><rect x="11.25" y="139.35" width="0.51" height="0.90" fill="#57b6f9"/><rect x="11.90" y="139.35" width="0.51" height="0.90" fill="#dedede"/><rect x="9.94" y="140.50" width="0.51" height="0.90" fill="#df95dc"/><rect x="10.59" y="140.50" width="0.51" height="0.90" fill="#dedede"/><rect x="8.62" y="141.65" width="0.51" height="0.90" fill="#f9dd46"/><rect x="9.28" y="141.65" width="0.51" height="0.90" fill="#dedede"/><rect x="7.31" y="142.80" width="0.51" height="0.90" fill="#57b6f9"/><rect x="7.97" y="142.80" width="0.51" height="0.90" fill="#dedede"/><rect class="k" x="7.31" y="143.95" width="5.75" height="0.90" fill="#b9e0f6"/><rect x="13.22" y="143.95" width="0.51" height="0.90" fill="#dedede"/><rect x="14.53" y="143.95" width="0.51" height="0.90" fill="#57b6f9"/><rect x="8.62" y="145.10" width="1.82" height="0.90" fill="#c8d8c0"/><rect x="10.59" y="145.10" width="0.51" height="0.90" fill="#dedede"/><rect x="11.90" y="145.10" width="0.51" height="0.90" fill="#f9dd46"/><rect class="k" x="9.94" y="146.25" width="7.07" height="0.90" fill="#b9e0f6"/><rect x="17.15" y="146.25" width="0.51" height="0.90" fill="#dedede"/><rect x="18.46" y="146.25" width="3.13" height="0.90" fill="#d8b2a2"/><rect x="22.40" y="146.25" width="4.44" height="0.90" fill="#d8b2a2"/><rect x="27.65" y="146.25" width="9.03" height="0.90" fill="#d8b2a2"/><rect x="36.83" y="146.25" width="0.51" height="0.90" fill="#dedede"/><rect x="8.62" y="147.40" width="0.51" height="0.90" fill="#f9dd46"/><rect x="9.28" y="147.40" width="0.51" height="0.90" fill="#dedede"/><rect x="8.62" y="148.55" width="1.82" height="0.90" fill="#c8d8c0"/><rect x="10.59" y="148.55" width="0.51" height="0.90" fill="#dedede"/><rect x="11.90" y="148.55" width="0.51" height="0.90" fill="#f9dd46"/><rect class="k" x="9.94" y="149.70" width="7.07" height="0.90" fill="#b9e0f6"/><rect x="17.15" y="149.70" width="0.51" height="0.90" fill="#dedede"/><rect x="18.46" y="149.70" width="5.10" height="0.90" fill="#d8b2a2"/><rect x="24.37" y="149.70" width="4.44" height="0.90" fill="#d8b2a2"/><rect x="29.62" y="149.70" width="3.79" height="0.90" fill="#d8b2a2"/><rect x="33.55" y="149.70" width="0.51" height="0.90" fill="#dedede"/><rect class="k" x="9.94" y="150.85" width="4.44" height="0.90" fill="#b9e0f6"/><rect x="14.53" y="150.85" width="0.51" height="0.90" fill="#dedede"/><rect x="15.84" y="150.85" width="0.51" height="0.90" fill="#df95dc"/><rect x="11.25" y="152.00" width="11.66" height="0.90" fill="#d8b2a2"/><rect x="23.06" y="152.00" width="0.51" height="0.90" fill="#dedede"/><rect x="24.37" y="152.00" width="0.51" height="0.90" fill="#57b6f9"/><rect class="k" x="12.56" y="153.15" width="3.79" height="0.90" fill="#b9e0f6"/><rect x="16.50" y="153.15" width="0.51" height="0.90" fill="#dedede"/><rect x="17.81" y="153.15" width="7.07" height="0.90" fill="#88d0f7"/><rect x="25.02" y="153.15" width="0.51" height="0.90" fill="#dedede"/><rect x="11.25" y="154.30" width="0.51" height="0.90" fill="#57b6f9"/><rect x="11.90" y="154.30" width="0.51" height="0.90" fill="#dedede"/><rect x="9.94" y="155.45" width="0.51" height="0.90" fill="#df95dc"/><rect x="10.59" y="155.45" width="0.51" height="0.90" fill="#dedede"/><rect x="8.62" y="156.60" width="0.51" height="0.90" fill="#f9dd46"/><rect x="9.28" y="156.60" width="0.51" height="0.90" fill="#dedede"/><rect x="8.62" y="157.75" width="1.82" height="0.90" fill="#c8d8c0"/><rect x="10.59" y="157.75" width="0.51" height="0.90" fill="#dedede"/><rect x="11.90" y="157.75" width="0.51" height="0.90" fill="#f9dd46"/><rect class="k" x="9.94" y="158.90" width="7.07" height="0.90" fill="#b9e0f6"/><rect x="17.15" y="158.90" width="0.51" height="0.90" fill="#dedede"/><rect x="18.46" y="158.90" width="3.13" height="0.90" fill="#d8b2a2"/><rect x="22.40" y="158.90" width="1.82" height="0.90" fill="#d8b2a2"/><rect x="25.02" y="158.90" width="4.44" height="0.90" fill="#d8b2a2"/><rect x="29.62" y="158.90" width="0.51" height="0.90" fill="#dedede"/><rect class="k" x="9.94" y="160.05" width="4.44" height="0.90" fill="#b9e0f6"/><rect x="14.53" y="160.05" width="0.51" height="0.90" fill="#dedede"/><rect x="15.84" y="160.05" width="0.51" height="0.90" fill="#df95dc"/><rect x="11.25" y="161.20" width="11.66" height="0.90" fill="#d8b2a2"/><rect x="23.06" y="161.20" width="0.51" height="0.90" fill="#dedede"/><rect x="24.37" y="161.20" width="0.51" height="0.90" fill="#57b6f9"/><rect class="k" x="12.56" y="162.35" width="3.79" height="0.90" fill="#b9e0f6"/><rect x="16.50" y="162.35" width="0.51" height="0.90" fill="#dedede"/><rect x="17.81" y="162.35" width="7.07" height="0.90" fill="#88d0f7"/><rect x="25.02" y="162.35" width="0.51" height="0.90" fill="#dedede"/><rect x="11.25" y="163.50" width="0.51" height="0.90" fill="#57b6f9"/><rect x="11.90" y="163.50" width="0.51" height="0.90" fill="#dedede"/><rect x="9.94" y="164.65" width="0.51" height="0.90" fill="#df95dc"/><rect x="10.59" y="164.65" width="0.51" height="0.90" fill="#dedede"/><rect x="8.62" y="165.80" width="0.51" height="0.90" fill="#f9dd46"/><rect x="9.28" y="165.80" width="0.51" height="0.90" fill="#dedede"/><rect x="7.31" y="166.95" width="0.51" height="0.90" fill="#57b6f9"/><rect x="7.97" y="166.95" width="0.51" height="0.90" fill="#dedede"/><rect x="6.00" y="168.10" width="0.51" height="0.90" fill="#df95dc"/><rect x="6.66" y="168.10" width="0.51" height="0.90" fill="#f9dd46"/><rect x="6.00" y="170.40" width="3.79" height="0.90" fill="#d2abcf"/><rect class="k" x="10.59" y="170.40" width="3.13" height="0.90" fill="#8cb9dd"/><rect class="k" x="14.53" y="170.40" width="7.72" height="0.90" fill="#b9e0f6"/><rect x="23.06" y="170.40" width="0.51" height="0.90" fill="#dedede"/><rect x="24.37" y="170.40" width="7.07" height="0.90" fill="#e0e0c2"/><rect x="31.58" y="170.40" width="0.51" height="0.90" fill="#f9dd46"/><rect x="32.24" y="170.40" width="0.51" height="0.90" fill="#df95dc"/><rect class="k" x="7.31" y="171.55" width="2.47" height="0.90" fill="#b9e0f6"/><rect x="9.94" y="171.55" width="0.51" height="0.90" fill="#dedede"/><rect x="11.25" y="171.55" width="0.51" height="0.90" fill="#57b6f9"/><rect x="11.90" y="171.55" width="3.79" height="0.90" fill="#d8b2a2"/><rect x="15.84" y="171.55" width="0.51" height="0.90" fill="#57b6f9"/><rect x="16.50" y="171.55" width="0.51" height="0.90" fill="#dedede"/><rect class="k" x="7.31" y="172.70" width="3.79" height="0.90" fill="#b9e0f6"/><rect x="11.25" y="172.70" width="0.51" height="0.90" fill="#dedede"/><rect x="12.56" y="172.70" width="3.13" height="0.90" fill="#d8b2a2"/><rect x="15.84" y="172.70" width="0.51" height="0.90" fill="#dedede"/><rect class="k" x="7.31" y="173.85" width="2.47" height="0.90" fill="#b9e0f6"/><rect x="9.94" y="173.85" width="0.51" height="0.90" fill="#dedede"/><rect x="11.25" y="173.85" width="8.38" height="0.90" fill="#d8b2a2"/><rect x="19.78" y="173.85" width="0.51" height="0.90" fill="#dedede"/><rect class="k" x="7.31" y="175.00" width="7.07" height="0.90" fill="#b9e0f6"/><rect x="14.53" y="175.00" width="0.51" height="0.90" fill="#dedede"/><rect x="15.84" y="175.00" width="5.75" height="0.90" fill="#d8b2a2"/><rect x="22.40" y="175.00" width="0.51" height="0.90" fill="#d8b2a2"/><rect x="23.71" y="175.00" width="3.79" height="0.90" fill="#d8b2a2"/><rect x="28.30" y="175.00" width="2.47" height="0.90" fill="#d8b2a2"/><rect x="31.58" y="175.00" width="6.41" height="0.90" fill="#d8b2a2"/><rect x="38.80" y="175.00" width="1.16" height="0.90" fill="#d8b2a2"/><rect x="40.77" y="175.00" width="1.82" height="0.90" fill="#d8b2a2"/><rect x="43.39" y="175.00" width="3.79" height="0.90" fill="#d8b2a2"/><rect x="47.98" y="175.00" width="2.47" height="0.90" fill="#d8b2a2"/><rect x="50.61" y="175.00" width="0.51" height="0.90" fill="#dedede"/><rect class="k" x="7.31" y="176.15" width="5.75" height="0.90" fill="#b9e0f6"/><rect x="13.22" y="176.15" width="0.51" height="0.90" fill="#dedede"/><rect x="14.53" y="176.15" width="0.51" height="0.90" fill="#57b6f9"/><rect x="8.62" y="177.30" width="1.82" height="0.90" fill="#c8d8c0"/><rect x="10.59" y="177.30" width="0.51" height="0.90" fill="#dedede"/><rect x="11.90" y="177.30" width="0.51" height="0.90" fill="#f9dd46"/><rect class="k" x="9.94" y="178.45" width="7.07" height="0.90" fill="#b9e0f6"/><rect x="17.15" y="178.45" width="0.51" height="0.90" fill="#dedede"/><rect x="18.46" y="178.45" width="7.07" height="0.90" fill="#d8b2a2"/><rect x="26.34" y="178.45" width="5.75" height="0.90" fill="#d8b2a2"/><rect x="32.90" y="178.45" width="1.16" height="0.90" fill="#d8b2a2"/><rect x="34.86" y="178.45" width="1.82" height="0.90" fill="#d8b2a2"/><rect x="37.49" y="178.45" width="3.79" height="0.90" fill="#d8b2a2"/><rect x="41.42" y="178.45" width="0.51" height="0.90" fill="#dedede"/><rect x="8.62" y="179.60" width="0.51" height="0.90" fill="#f9dd46"/><rect x="9.28" y="179.60" width="0.51" height="0.90" fill="#dedede"/><rect x="7.31" y="180.75" width="0.51" height="0.90" fill="#57b6f9"/><rect x="7.97" y="180.75" width="0.51" height="0.90" fill="#dedede"/><rect x="6.00" y="181.90" width="0.51" height="0.90" fill="#df95dc"/><rect x="6.66" y="181.90" width="0.51" height="0.90" fill="#f9dd46"/><rect x="6.00" y="184.20" width="3.79" height="0.90" fill="#d2abcf"/><rect class="k" x="10.59" y="184.20" width="3.13" height="0.90" fill="#8cb9dd"/><rect x="14.53" y="184.20" width="9.69" height="0.90" fill="#88d0f7"/><rect x="25.02" y="184.20" width="0.51" height="0.90" fill="#dedede"/><rect x="26.34" y="184.20" width="7.07" height="0.90" fill="#e0e0c2"/><rect x="33.55" y="184.20" width="0.51" height="0.90" fill="#f9dd46"/><rect x="34.21" y="184.20" width="0.51" height="0.90" fill="#df95dc"/><rect class="k" x="7.31" y="185.35" width="2.47" height="0.90" fill="#b9e0f6"/><rect x="9.94" y="185.35" width="0.51" height="0.90" fill="#dedede"/><rect x="11.25" y="185.35" width="0.51" height="0.90" fill="#57b6f9"/><rect x="11.90" y="185.35" width="3.79" height="0.90" fill="#d8b2a2"/><rect x="15.84" y="185.35" width="0.51" height="0.90" fill="#57b6f9"/><rect x="16.50" y="185.35" width="0.51" height="0.90" fill="#dedede"/><rect class="k" x="7.31" y="186.50" width="3.79" height="0.90" fill="#b9e0f6"/><rect x="11.25" y="186.50" width="0.51" height="0.90" fill="#dedede"/><rect x="12.56" y="186.50" width="5.10" height="0.90" fill="#d8b2a2"/><rect x="17.81" y="186.50" width="0.51" height="0.90" fill="#dedede"/><rect class="k" x="7.31" y="187.65" width="2.47" height="0.90" fill="#b9e0f6"/><rect x="9.94" y="187.65" width="0.51" height="0.90" fill="#dedede"/><rect x="11.25" y="187.65" width="8.38" height="0.90" fill="#d8b2a2"/><rect x="19.78" y="187.65" width="0.51" height="0.90" fill="#dedede"/><rect class="k" x="7.31" y="188.80" width="4.44" height="0.90" fill="#b9e0f6"/><rect x="11.90" y="188.80" width="0.51" height="0.90" fill="#dedede"/><rect x="13.22" y="188.80" width="4.44" height="0.90" fill="#d8b2a2"/><rect x="18.46" y="188.80" width="0.51" height="0.90" fill="#d8b2a2"/><rect x="19.78" y="188.80" width="3.13" height="0.90" fill="#d8b2a2"/><rect x="23.06" y="188.80" width="0.51" height="0.90" fill="#dedede"/><rect class="k" x="7.31" y="189.95" width="7.07" height="0.90" fill="#b9e0f6"/><rect x="14.53" y="189.95" width="0.51" height="0.90" fill="#dedede"/><rect x="15.84" y="189.95" width="4.44" height="0.90" fill="#d8b2a2"/><rect x="21.09" y="189.95" width="1.16" height="0.90" fill="#d8b2a2"/><rect x="23.06" y="189.95" width="5.10" height="0.90" fill="#d8b2a2"/><rect x="28.96" y="189.95" width="2.47" height="0.90" fill="#d8b2a2"/><rect x="32.24" y="189.95" width="6.41" height="0.90" fill="#d8b2a2"/><rect x="39.46" y="189.95" width="1.16" height="0.90" fill="#d8b2a2"/><rect x="41.42" y="189.95" width="1.82" height="0.90" fill="#d8b2a2"/><rect x="44.05" y="189.95" width="3.79" height="0.90" fill="#d8b2a2"/><rect x="48.64" y="189.95" width="2.47" height="0.90" fill="#d8b2a2"/><rect x="51.26" y="189.95" width="0.51" height="0.90" fill="#dedede"/><rect class="k" x="7.31" y="191.10" width="4.44" height="0.90" fill="#b9e0f6"/><rect x="11.90" y="191.10" width="0.51" height="0.90" fill="#dedede"/><rect x="13.22" y="191.10" width="0.51" height="0.90" fill="#57b6f9"/><rect class="k" x="8.62" y="192.25" width="3.79" height="0.90" fill="#b9e0f6"/><rect x="12.56" y="192.25" width="0.51" height="0.90" fill="#dedede"/><rect class="k" x="13.87" y="192.25" width="0.51" height="0.90" fill="#b9e0f6"/><rect x="14.53" y="192.25" width="0.51" height="0.90" fill="#dedede"/><rect x="15.18" y="192.25" width="3.79" height="0.90" fill="#e0e0c2"/><rect x="19.12" y="192.25" width="0.51" height="0.90" fill="#f9dd46"/><rect x="19.78" y="192.25" width="0.51" height="0.90" fill="#df95dc"/><rect class="k" x="21.09" y="192.25" width="1.16" height="0.90" fill="#b9e0f6"/><rect x="22.40" y="192.25" width="0.51" height="0.90" fill="#dedede"/><rect class="k" x="23.71" y="192.25" width="0.51" height="0.90" fill="#b9e0f6"/><rect x="24.37" y="192.25" width="0.51" height="0.90" fill="#dedede"/><rect x="25.02" y="192.25" width="2.47" height="0.90" fill="#e0e0c2"/><rect x="27.65" y="192.25" width="0.51" height="0.90" fill="#57b6f9"/><rect x="28.30" y="192.25" width="0.51" height="0.90" fill="#57b6f9"/><rect x="29.62" y="192.25" width="0.51" height="0.90" fill="#df95dc"/><rect x="30.27" y="192.25" width="0.51" height="0.90" fill="#f9dd46"/><rect x="30.93" y="192.25" width="0.51" height="0.90" fill="#dedede"/><rect x="7.31" y="193.40" width="0.51" height="0.90" fill="#57b6f9"/><rect x="7.97" y="193.40" width="0.51" height="0.90" fill="#dedede"/><rect class="k" x="7.31" y="194.55" width="5.75" height="0.90" fill="#b9e0f6"/><rect x="13.22" y="194.55" width="0.51" height="0.90" fill="#dedede"/><rect x="14.53" y="194.55" width="0.51" height="0.90" fill="#57b6f9"/><rect x="8.62" y="195.70" width="1.82" height="0.90" fill="#c8d8c0"/><rect x="10.59" y="195.70" width="0.51" height="0.90" fill="#dedede"/><rect x="11.90" y="195.70" width="0.51" height="0.90" fill="#f9dd46"/><rect class="k" x="9.94" y="196.85" width="7.07" height="0.90" fill="#b9e0f6"/><rect x="17.15" y="196.85" width="0.51" height="0.90" fill="#dedede"/><rect x="18.46" y="196.85" width="3.13" height="0.90" fill="#d8b2a2"/><rect x="22.40" y="196.85" width="4.44" height="0.90" fill="#d8b2a2"/><rect x="27.65" y="196.85" width="9.03" height="0.90" fill="#d8b2a2"/><rect x="36.83" y="196.85" width="0.51" height="0.90" fill="#dedede"/><rect x="8.62" y="198.00" width="0.51" height="0.90" fill="#f9dd46"/><rect x="9.28" y="198.00" width="0.51" height="0.90" fill="#dedede"/><rect x="8.62" y="199.15" width="1.82" height="0.90" fill="#c8d8c0"/><rect x="10.59" y="199.15" width="0.51" height="0.90" fill="#dedede"/><rect x="11.90" y="199.15" width="0.51" height="0.90" fill="#f9dd46"/><rect class="k" x="9.94" y="200.30" width="7.07" height="0.90" fill="#b9e0f6"/><rect x="17.15" y="200.30" width="0.51" height="0.90" fill="#dedede"/><rect x="18.46" y="200.30" width="3.13" height="0.90" fill="#d8b2a2"/><rect x="22.40" y="200.30" width="1.82" height="0.90" fill="#d8b2a2"/><rect x="25.02" y="200.30" width="4.44" height="0.90" fill="#d8b2a2"/><rect x="29.62" y="200.30" width="0.51" height="0.90" fill="#dedede"/><rect class="k" x="9.94" y="201.45" width="4.44" height="0.90" fill="#b9e0f6"/><rect x="14.53" y="201.45" width="0.51" height="0.90" fill="#dedede"/><rect x="15.84" y="201.45" width="0.51" height="0.90" fill="#df95dc"/><rect x="11.25" y="202.60" width="11.66" height="0.90" fill="#d8b2a2"/><rect x="23.06" y="202.60" width="0.51" height="0.90" fill="#dedede"/><rect x="24.37" y="202.60" width="0.51" height="0.90" fill="#57b6f9"/><rect class="k" x="12.56" y="203.75" width="3.79" height="0.90" fill="#b9e0f6"/><rect x="16.50" y="203.75" width="0.51" height="0.90" fill="#dedede"/><rect x="17.81" y="203.75" width="7.07" height="0.90" fill="#88d0f7"/><rect x="25.02" y="203.75" width="0.51" height="0.90" fill="#dedede"/><rect x="11.25" y="204.90" width="0.51" height="0.90" fill="#57b6f9"/><rect x="11.90" y="204.90" width="0.51" height="0.90" fill="#dedede"/><rect x="9.94" y="206.05" width="0.51" height="0.90" fill="#df95dc"/><rect x="10.59" y="206.05" width="0.51" height="0.90" fill="#dedede"/><rect x="8.62" y="207.20" width="0.51" height="0.90" fill="#f9dd46"/><rect x="9.28" y="207.20" width="0.51" height="0.90" fill="#dedede"/><rect x="7.31" y="208.35" width="0.51" height="0.90" fill="#57b6f9"/><rect x="7.97" y="208.35" width="0.51" height="0.90" fill="#dedede"/><rect x="6.00" y="209.50" width="0.51" height="0.90" fill="#df95dc"/><rect x="6.66" y="209.50" width="0.51" height="0.90" fill="#f9dd46"/></svg>
  <div class="sb" style="left:1297.5px;width:1px;background:#171717"></div>
  <div class="sb" style="left:1298.5px;width:4px;background:#222222"></div>
  <div class="mk" style="left:1298.5px;top:728px;width:4px;height:2px;background:#8a8a8a"></div>
</div>
<div style="position:absolute;left:1386px;top:84px;width:4px;height:744px;background:linear-gradient(90deg,#181818,#131313)"></div>
</body></html>
